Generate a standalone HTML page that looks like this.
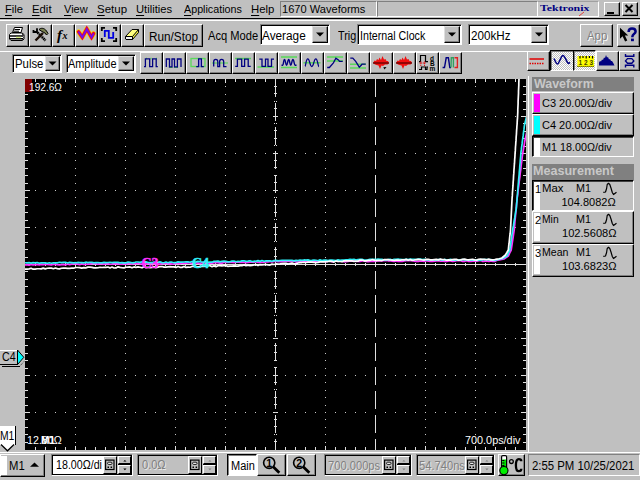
<!DOCTYPE html>
<html><head><meta charset="utf-8">
<style>
*{margin:0;padding:0;box-sizing:border-box}
html,body{width:640px;height:480px;overflow:hidden;background:#c0c0c0;font-family:"Liberation Sans",sans-serif;font-size:11px;color:#000;position:relative}
.a{position:absolute}
.t{position:absolute;white-space:nowrap;line-height:1}
</style></head><body>

<div class="t" id="t0" style="left:4.80px;top:4.00px;font-size:11px;;transform:scaleX(1.0153);transform-origin:0 0"><span style="text-decoration:underline;text-underline-offset:2px">F</span>ile</div>
<div class="t" id="t1" style="left:32.20px;top:4.00px;font-size:11px;;transform:scaleX(1.0300);transform-origin:0 0"><span style="text-decoration:underline;text-underline-offset:2px">E</span>dit</div>
<div class="t" id="t2" style="left:64.00px;top:4.00px;font-size:11px;"><span style="text-decoration:underline;text-underline-offset:2px">V</span>iew</div>
<div class="t" id="t3" style="left:96.60px;top:4.00px;font-size:11px;;transform:scaleX(1.0439);transform-origin:0 0"><span style="text-decoration:underline;text-underline-offset:2px">S</span>etup</div>
<div class="t" id="t4" style="left:136.40px;top:4.00px;font-size:11px;;transform:scaleX(1.0204);transform-origin:0 0"><span style="text-decoration:underline;text-underline-offset:2px">U</span>tilities</div>
<div class="t" id="t5" style="left:183.80px;top:4.00px;font-size:11px;;transform:scaleX(0.9758);transform-origin:0 0"><span style="text-decoration:underline;text-underline-offset:2px">A</span>pplications</div>
<div class="t" id="t6" style="left:251.40px;top:4.00px;font-size:11px;;transform:scaleX(1.0328);transform-origin:0 0"><span style="text-decoration:underline;text-underline-offset:2px">H</span>elp</div>
<div class="a" style="left:280px;top:1px;width:97px;height:16px;background:#c0c0c0;border-top:1px solid #808080;border-left:1px solid #808080;border-right:1px solid #fff;border-bottom:1px solid #fff;box-shadow:inset 1px 1px 0 #000;box-shadow:none"></div>
<div class="t" id="t7" style="left:281.90px;top:4.40px;font-size:11px;;transform:scaleX(1.0080);transform-origin:0 0">1670 Waveforms</div>
<div class="a" style="left:377px;top:1px;width:161px;height:16px;background:#c0c0c0;border-top:1px solid #808080;border-left:1px solid #808080;border-right:1px solid #fff;border-bottom:1px solid #fff;box-shadow:inset 1px 1px 0 #000;box-shadow:none"></div>
<div class="a" style="left:538px;top:1px;width:61px;height:16px;background:#c8c8c8;border-top:1px solid #a0a0a0;border-right:1px solid #fff;border-bottom:1px solid #fff"></div>
<div class="t" id="t8" style="left:540.00px;top:4.00px;font-size:9px;font-family:'Liberation Serif',serif;font-weight:bold;color:#000080;transform:scaleX(1.3153);transform-origin:0 0">Tektronix</div>
<svg class="a" style="left:578px;top:11px" width="8" height="6" viewBox="0 0 8 6"><path d="M1 5 L6 1" stroke="#e04040" stroke-width="1"/></svg>
<div class="a" style="left:604px;top:2px;width:16px;height:14px;background:#c0c0c0;border-top:1px solid #fff;border-left:1px solid #fff;border-right:1px solid #000;border-bottom:1px solid #000;box-shadow:inset -1px -1px 0 #808080;"></div>
<svg class="a" style="left:604px;top:2px" width="16" height="14" viewBox="0 0 16 14"><rect x="3" y="10" width="7" height="2" fill="#000"/></svg>
<div class="a" style="left:622px;top:2px;width:16px;height:14px;background:#c0c0c0;border-top:1px solid #fff;border-left:1px solid #fff;border-right:1px solid #000;border-bottom:1px solid #000;box-shadow:inset -1px -1px 0 #808080;"></div>
<svg class="a" style="left:622px;top:2px" width="16" height="14" viewBox="0 0 16 14"><path d="M3.5 3 L10.5 10 M10.5 3 L3.5 10" stroke="#000" stroke-width="2"/></svg>
<div class="a" style="left:0;top:18px;width:640px;height:1px;background:#000"></div>
<div class="a" style="left:0;top:20px;width:640px;height:1px;background:#fff"></div>
<div class="a" style="left:6px;top:24px;width:23px;height:23px;background:#c0c0c0;border-top:1px solid #fff;border-left:1px solid #fff;border-right:1px solid #000;border-bottom:1px solid #000;box-shadow:inset -1px -1px 0 #808080;"></div>
<svg class="a" style="left:6px;top:24px" width="23" height="23" viewBox="0 0 23 23"><path d="M8.5 3.5 H16.5 L15 8.5 H6.5 Z" fill="#fff" stroke="#000"/><path d="M8.5 5.5h5.5 M7.5 7.2h5.5" stroke="#000" stroke-width="1"/><path d="M5 9 H16 L18 10.5 V15 L16.5 16.5 H5 L3.5 15 V10.5 Z" fill="#fff" stroke="#000"/><path d="M4 12h13 M4 14.8h13" stroke="#000" stroke-width="1.5"/><rect x="10" y="12.8" width="5" height="1.3" fill="#d8f080"/><path d="M16 10h1v1h-1zM17 11h1v1h-1zM16 12h1v1h-1zM17 13h1v1h-1zM16 15h1v1h-1z" fill="#404040"/></svg>
<div class="a" style="left:29px;top:24px;width:23px;height:23px;background:#c0c0c0;border-top:1px solid #fff;border-left:1px solid #fff;border-right:1px solid #000;border-bottom:1px solid #000;box-shadow:inset -1px -1px 0 #808080;"></div>
<svg class="a" style="left:29px;top:24px" width="23" height="23" viewBox="0 0 23 23"><path d="M8.5 8.5 L16.5 16.5" stroke="#000" stroke-width="2.6" stroke-dasharray="1.5 0.6"/><path d="M14 9 L6.5 16.5" stroke="#1a0c04" stroke-width="2.4"/><path d="M4.5 6 V8 H8 V4.3" stroke="#000" stroke-width="1.8" fill="none"/><path d="M10 5.5 C12 3.5 15.5 4 17.5 7 L19 9.5 L17.5 11 L16 9 L13 7.5 Z" fill="#7a8050" stroke="#000" stroke-width="1"/></svg>
<div class="a" style="left:52px;top:24px;width:23px;height:23px;background:#c0c0c0;border-top:1px solid #fff;border-left:1px solid #fff;border-right:1px solid #000;border-bottom:1px solid #000;box-shadow:inset -1px -1px 0 #808080;"></div>
<svg class="a" style="left:52px;top:24px" width="23" height="23" viewBox="0 0 23 23"><text x="5" y="15.5" font-family="Liberation Serif" font-style="italic" font-weight="bold" font-size="15">f</text><text x="10.5" y="14.5" font-family="Liberation Serif" font-style="italic" font-weight="bold" font-size="10">x</text></svg>
<div class="a" style="left:75px;top:24px;width:23px;height:23px;background:#c0c0c0;border-top:1px solid #fff;border-left:1px solid #fff;border-right:1px solid #000;border-bottom:1px solid #000;box-shadow:inset -1px -1px 0 #808080;"></div>
<svg class="a" style="left:75px;top:24px" width="23" height="23" viewBox="0 0 23 23"><path d="M3.5 7.8 L7.3 13.3 L11.8 5 L16.5 13.3 L18.6 9.5" fill="none" stroke="#f8d000" stroke-width="4.8" stroke-linecap="round" stroke-linejoin="round"/><path d="M3.5 7.8 L7.3 13.3 L11.8 5 L16.5 13.3 L18.6 9.5" fill="none" stroke="#e80030" stroke-width="3.4" stroke-linecap="round"/><path d="M3.5 7.8 L7.3 13.3 L11.8 5 L16.5 13.3 L18.6 9.5" fill="none" stroke="#7010f0" stroke-width="1.7"/></svg>
<div class="a" style="left:98px;top:24px;width:23px;height:23px;background:#c0c0c0;border-top:1px solid #fff;border-left:1px solid #fff;border-right:1px solid #000;border-bottom:1px solid #000;box-shadow:inset -1px -1px 0 #808080;"></div>
<svg class="a" style="left:98px;top:24px" width="23" height="23" viewBox="0 0 23 23"><path d="M3.8 7 V3.8 H7 M15 3.8 H18.2 V7 M3.8 14 V17.2 H7 M15 17.2 H18.2 V14" stroke="#000" stroke-width="1.8" fill="none"/><path d="M6.8 13 V6.8 H10.8 V13.8 H15.2 V8" stroke="#0000e0" stroke-width="1.8" fill="none"/></svg>
<div class="a" style="left:121px;top:24px;width:23px;height:23px;background:#c0c0c0;border-top:1px solid #fff;border-left:1px solid #fff;border-right:1px solid #000;border-bottom:1px solid #000;box-shadow:inset -1px -1px 0 #808080;"></div>
<svg class="a" style="left:121px;top:24px" width="23" height="23" viewBox="0 0 23 23"><path d="M4.5 12.5 L11 5.5 H17.5 L11.5 12.5 Z" fill="#ffff80"/><path d="M11.5 12.5 L17.5 5.5 V8.5 L11.5 15.5 Z" fill="#f0f040"/><path d="M4.5 12.5 H11.5 V15.5 H5 L4.5 15 Z" fill="#f0f0f0"/><path d="M4.5 12.5 L11 5.5 H17.5 V8.5 L11.5 15.5 H5 L4.5 15 Z M4.5 12.5 H11.5 L17.5 5.5 M11.5 12.5 V15.5" stroke="#000" stroke-width="1" fill="none"/></svg>
<div class="a" style="left:144px;top:24px;width:59px;height:23px;background:#c0c0c0;border-top:1px solid #fff;border-left:1px solid #fff;border-right:1px solid #000;border-bottom:1px solid #000;box-shadow:inset -1px -1px 0 #808080;"></div>
<div class="t" id="t9" style="left:149.20px;top:30.56px;font-size:12px;;transform:scaleX(0.9807);transform-origin:0 0">Run/Stop</div>
<div class="t" id="t10" style="left:207.70px;top:30.00px;font-size:12px;;transform:scaleX(0.9280);transform-origin:0 0">Acq Mode</div>
<div class="a" style="left:260px;top:24px;width:70px;height:21px;background:#fff;border-top:1px solid #808080;border-left:1px solid #808080;border-right:1px solid #fff;border-bottom:1px solid #fff;box-shadow:inset 1px 1px 0 #000;"></div><div class="a" style="left:312px;top:26px;width:16px;height:17px;background:#c0c0c0;border-top:1px solid #fff;border-left:1px solid #fff;border-right:1px solid #000;border-bottom:1px solid #000;box-shadow:inset -1px -1px 0 #808080;border-top-color:#dfdfdf;border-left-color:#dfdfdf"></div><svg class="a" style="left:312px;top:26px" width="16" height="17" viewBox="0 0 16 17"><path d="M4.0 6.5 h8 l-4 4z" fill="#000"/></svg><div class="t" id="t11" style="left:262.00px;top:29.55px;font-size:12px;;transform:scaleX(0.9835);transform-origin:0 0">Average</div>
<div class="t" id="t12" style="left:337.70px;top:30.00px;font-size:12px;;transform:scaleX(0.9025);transform-origin:0 0">Trig</div>
<div class="a" style="left:357px;top:24px;width:105px;height:21px;background:#fff;border-top:1px solid #808080;border-left:1px solid #808080;border-right:1px solid #fff;border-bottom:1px solid #fff;box-shadow:inset 1px 1px 0 #000;"></div><div class="a" style="left:444px;top:26px;width:16px;height:17px;background:#c0c0c0;border-top:1px solid #fff;border-left:1px solid #fff;border-right:1px solid #000;border-bottom:1px solid #000;box-shadow:inset -1px -1px 0 #808080;border-top-color:#dfdfdf;border-left-color:#dfdfdf"></div><svg class="a" style="left:444px;top:26px" width="16" height="17" viewBox="0 0 16 17"><path d="M4.0 6.5 h8 l-4 4z" fill="#000"/></svg><div class="t" id="t13" style="left:360.40px;top:29.50px;font-size:12px;;transform:scaleX(0.8900);transform-origin:0 0">Internal Clock</div>
<div class="a" style="left:468px;top:24px;width:81px;height:21px;background:#fff;border-top:1px solid #808080;border-left:1px solid #808080;border-right:1px solid #fff;border-bottom:1px solid #fff;box-shadow:inset 1px 1px 0 #000;"></div><div class="a" style="left:531px;top:26px;width:16px;height:17px;background:#c0c0c0;border-top:1px solid #fff;border-left:1px solid #fff;border-right:1px solid #000;border-bottom:1px solid #000;box-shadow:inset -1px -1px 0 #808080;border-top-color:#dfdfdf;border-left-color:#dfdfdf"></div><svg class="a" style="left:531px;top:26px" width="16" height="17" viewBox="0 0 16 17"><path d="M4.0 6.5 h8 l-4 4z" fill="#000"/></svg><div class="t" id="t14" style="left:470.60px;top:30.00px;font-size:12px;;transform:scaleX(0.9696);transform-origin:0 0">200kHz</div>
<div class="a" style="left:580px;top:24px;width:33px;height:23px;background:#c0c0c0;border-top:1px solid #fff;border-left:1px solid #fff;border-right:1px solid #000;border-bottom:1px solid #000;box-shadow:inset -1px -1px 0 #808080;"></div>
<div class="t" id="t15" style="left:587.00px;top:30.00px;font-size:12px;color:#808080;text-shadow:1px 1px 0 #fff;transform:scaleX(0.9500);transform-origin:0 0">App</div>
<div class="a" style="left:617px;top:24px;width:23px;height:23px;background:#c0c0c0;border-top:1px solid #fff;border-left:1px solid #fff;border-right:1px solid #000;border-bottom:1px solid #000;box-shadow:inset -1px -1px 0 #808080;"></div>
<svg class="a" style="left:617px;top:24px" width="23" height="23" viewBox="0 0 23 23"><path d="M3 3.8 L3 14.8 L5.6 12.3 L8.1 17.6 L10.3 16.6 L7.9 11.6 L11.2 11.6 Z" fill="#000"/><path d="M11.6 8 C11.6 5.3 13 4.4 15 4.4 C17.2 4.4 18.6 5.6 18.6 7.4 C18.6 9.6 15.4 10.2 15.4 12.6 V13.2" stroke="#000080" stroke-width="2.5" fill="none"/><rect x="14" y="14.6" width="2.9" height="2.6" fill="#000080"/></svg>
<div class="a" style="left:0;top:51px;width:640px;height:1px;background:#fff"></div>
<div class="a" style="left:12px;top:54px;width:50px;height:19px;background:#fff;border-top:1px solid #808080;border-left:1px solid #808080;border-right:1px solid #fff;border-bottom:1px solid #fff;box-shadow:inset 1px 1px 0 #000;"></div><div class="a" style="left:45px;top:56px;width:15px;height:15px;background:#c0c0c0;border-top:1px solid #fff;border-left:1px solid #fff;border-right:1px solid #000;border-bottom:1px solid #000;box-shadow:inset -1px -1px 0 #808080;border-top-color:#dfdfdf;border-left-color:#dfdfdf"></div><svg class="a" style="left:45px;top:56px" width="15" height="15" viewBox="0 0 15 15"><path d="M3.5 5.5 h8 l-4 4z" fill="#000"/></svg><div class="t" id="t16" style="left:14.60px;top:58.00px;font-size:12px;;transform:scaleX(0.9477);transform-origin:0 0">Pulse</div>
<div class="a" style="left:66px;top:54px;width:70px;height:19px;background:#fff;border-top:1px solid #808080;border-left:1px solid #808080;border-right:1px solid #fff;border-bottom:1px solid #fff;box-shadow:inset 1px 1px 0 #000;"></div><div class="a" style="left:118px;top:56px;width:16px;height:15px;background:#c0c0c0;border-top:1px solid #fff;border-left:1px solid #fff;border-right:1px solid #000;border-bottom:1px solid #000;box-shadow:inset -1px -1px 0 #808080;border-top-color:#dfdfdf;border-left-color:#dfdfdf"></div><svg class="a" style="left:118px;top:56px" width="16" height="15" viewBox="0 0 16 15"><path d="M4.0 5.5 h8 l-4 4z" fill="#000"/></svg><div class="t" id="t17" style="left:68.40px;top:58.00px;font-size:12px;;transform:scaleX(0.9080);transform-origin:0 0">Amplitude</div>
<div class="a" style="left:140px;top:52px;width:23px;height:22px;background:#c0c0c0;border-top:1px solid #fff;border-left:1px solid #fff;border-right:1px solid #000;border-bottom:1px solid #000;box-shadow:inset -1px -1px 0 #808080;"></div>
<svg class="a" style="left:140px;top:52px" width="23" height="22" viewBox="0 0 23 22"><path d="M6 6.5h1M10.5 6.5h1M16 6.5h1" stroke="#40e040" stroke-width="1.5"/><path d="M4 14.6 H5.4 V6.8 H9.7 V14.6 H12.6 V6.8 H16.2 V14.6 H17.8" stroke="#000080" stroke-width="1.3" fill="none"/></svg>
<div class="a" style="left:163px;top:52px;width:23px;height:22px;background:#c0c0c0;border-top:1px solid #fff;border-left:1px solid #fff;border-right:1px solid #000;border-bottom:1px solid #000;box-shadow:inset -1px -1px 0 #808080;"></div>
<svg class="a" style="left:163px;top:52px" width="23" height="22" viewBox="0 0 23 22"><path d="M3.3 15 V7 H6.5 V15 H9 V7 H11.5 V15 H14.4 V7 H18 V15" stroke="#000080" stroke-width="1.3" fill="none"/><path d="M6.5 15.5 H9 M11.5 15.5 H14.4" stroke="#208040" stroke-width="0.8"/></svg>
<div class="a" style="left:186px;top:52px;width:23px;height:22px;background:#c0c0c0;border-top:1px solid #fff;border-left:1px solid #fff;border-right:1px solid #000;border-bottom:1px solid #000;box-shadow:inset -1px -1px 0 #808080;"></div>
<svg class="a" style="left:186px;top:52px" width="23" height="22" viewBox="0 0 23 22"><rect x="5" y="6.5" width="14" height="8" fill="none" stroke="#40e040" stroke-width="1.3" opacity="0.8"/><rect x="12.6" y="6.8" width="2.8" height="7.8" fill="#b0a0f0"/><path d="M10.2 14.6 H12.6 V6.8 H15.4 V14.6 H17.8" stroke="#000080" stroke-width="1.3" fill="none"/></svg>
<div class="a" style="left:209px;top:52px;width:23px;height:22px;background:#c0c0c0;border-top:1px solid #fff;border-left:1px solid #fff;border-right:1px solid #000;border-bottom:1px solid #000;box-shadow:inset -1px -1px 0 #808080;"></div>
<svg class="a" style="left:209px;top:52px" width="23" height="22" viewBox="0 0 23 22"><path d="M3 11 H19" stroke="#40e040" stroke-width="1.3" opacity="0.7"/><path d="M4.7 14.6 V9.8 C4.7 6.6 8.8 6.6 8.8 9.8 V14.6 H10.6 V9.8 C10.6 6.6 14.7 6.6 14.7 9.8 V14.6 H17.5" stroke="#000080" stroke-width="1.3" fill="none"/></svg>
<div class="a" style="left:232px;top:52px;width:23px;height:22px;background:#c0c0c0;border-top:1px solid #fff;border-left:1px solid #fff;border-right:1px solid #000;border-bottom:1px solid #000;box-shadow:inset -1px -1px 0 #808080;"></div>
<svg class="a" style="left:232px;top:52px" width="23" height="22" viewBox="0 0 23 22"><path d="M3 6.5 H19" stroke="#40e040" stroke-width="1.5" opacity="0.8"/><path d="M3.2 14.4 H5.4 V7.2 H9.7 V14.4 H12.6 V7.2 H16.2 V14.4 H18.7" stroke="#000080" stroke-width="1.3" fill="none"/></svg>
<div class="a" style="left:255px;top:52px;width:23px;height:22px;background:#c0c0c0;border-top:1px solid #fff;border-left:1px solid #fff;border-right:1px solid #000;border-bottom:1px solid #000;box-shadow:inset -1px -1px 0 #808080;"></div>
<svg class="a" style="left:255px;top:52px" width="23" height="22" viewBox="0 0 23 22"><path d="M2.5 15 H19" stroke="#40e040" stroke-width="1.5" opacity="0.8"/><path d="M4.3 7.2 H7 V14.4 H10.5 V7.2 H13 V14.4 H16.5 V7.2 H19" stroke="#000080" stroke-width="1.3" fill="none"/></svg>
<div class="a" style="left:278px;top:52px;width:23px;height:22px;background:#c0c0c0;border-top:1px solid #fff;border-left:1px solid #fff;border-right:1px solid #000;border-bottom:1px solid #000;box-shadow:inset -1px -1px 0 #808080;"></div>
<svg class="a" style="left:278px;top:52px" width="23" height="22" viewBox="0 0 23 22"><path d="M3 5 H19 M3 15.5 H19" stroke="#40e040" stroke-width="1.5" opacity="0.8"/><path d="M3.5 13.2 H4.8 C5.6 13.2 5.4 7.5 6.5 7.5 C7.6 7.5 7.5 13.2 8.6 13.2 C9.6 13.2 9.6 7.5 10.7 7.5 C11.8 7.5 11.7 13.2 12.8 13.2 C13.8 13.2 13.8 7.5 14.9 7.5 C16 7.5 16.2 13.2 17 13.2 H18.5" stroke="#000080" stroke-width="1.4" fill="none"/></svg>
<div class="a" style="left:301px;top:52px;width:23px;height:22px;background:#c0c0c0;border-top:1px solid #fff;border-left:1px solid #fff;border-right:1px solid #000;border-bottom:1px solid #000;box-shadow:inset -1px -1px 0 #808080;"></div>
<svg class="a" style="left:301px;top:52px" width="23" height="22" viewBox="0 0 23 22"><path d="M2.5 10.8 H19.5" stroke="#40e040" stroke-width="1.5" opacity="0.8"/><path d="M4 14.6 C4.8 14.6 4.8 6.8 6.8 6.8 C8.8 6.8 8.8 14.6 10.8 14.6 C12.8 14.6 12.8 6.8 14.8 6.8 C16.8 6.8 16.8 14.6 18 14.6" stroke="#000080" stroke-width="1.3" fill="none"/></svg>
<div class="a" style="left:324px;top:52px;width:23px;height:22px;background:#c0c0c0;border-top:1px solid #fff;border-left:1px solid #fff;border-right:1px solid #000;border-bottom:1px solid #000;box-shadow:inset -1px -1px 0 #808080;"></div>
<svg class="a" style="left:324px;top:52px" width="23" height="22" viewBox="0 0 23 22"><path d="M3 5 H19 M3 9 H19" stroke="#40e040" stroke-width="1.5" opacity="0.8"/><path d="M3.2 15.5 H5.4 L9.4 10.8 L11.9 6.1 L14.4 7.9 L15.5 9.4 H18.7" stroke="#000080" stroke-width="1.3" fill="none"/></svg>
<div class="a" style="left:347px;top:52px;width:23px;height:22px;background:#c0c0c0;border-top:1px solid #fff;border-left:1px solid #fff;border-right:1px solid #000;border-bottom:1px solid #000;box-shadow:inset -1px -1px 0 #808080;"></div>
<svg class="a" style="left:347px;top:52px" width="23" height="22" viewBox="0 0 23 22"><path d="M3 12.2 H19 M3 16 H19" stroke="#40e040" stroke-width="1.5" opacity="0.8"/><path d="M3.3 6.1 H5.8 L8.7 9.4 L12.3 15.1 L14.4 13 L15 12.2 H18.7" stroke="#000080" stroke-width="1.3" fill="none"/></svg>
<div class="a" style="left:370px;top:52px;width:23px;height:22px;background:#c0c0c0;border-top:1px solid #fff;border-left:1px solid #fff;border-right:1px solid #000;border-bottom:1px solid #000;box-shadow:inset -1px -1px 0 #808080;"></div>
<svg class="a" style="left:370px;top:52px" width="23" height="22" viewBox="0 0 23 22"><path d="M3 11 L4.5 8.5 L6 9 L7 7 L8.5 8 L9.5 5.5 L11 8 L12.5 4 L14 7.5 L15.5 7 L16.5 9 L18 9 L19 11 L17.5 12.5 L15 12.5 L13 14 L11.5 13.5 L10 17 L8.5 13.5 L6.5 13 L5 12.5 Z" fill="#f01010"/><path d="M3 11 H19" stroke="#600000" stroke-width="1.3"/><path d="M13.3 15.3 L16.5 15 L14.5 17.5 Z" fill="#000"/></svg>
<div class="a" style="left:393px;top:52px;width:23px;height:22px;background:#c0c0c0;border-top:1px solid #fff;border-left:1px solid #fff;border-right:1px solid #000;border-bottom:1px solid #000;box-shadow:inset -1px -1px 0 #808080;"></div>
<svg class="a" style="left:393px;top:52px" width="23" height="22" viewBox="0 0 23 22"><path d="M3 11 L4.5 8.5 L6 9 L7 7 L8.5 8 L9.5 5.5 L11 8 L12.5 4 L14 7.5 L15.5 7 L16.5 9 L18 9 L19 11 L17.5 12.5 L15 12.5 L13 14 L11.5 13.5 L10 17 L8.5 13.5 L6.5 13 L5 12.5 Z" fill="#f01010"/><path d="M3 11 H19" stroke="#600000" stroke-width="1.3"/></svg>
<div class="a" style="left:416px;top:52px;width:23px;height:22px;background:#c0c0c0;border-top:1px solid #fff;border-left:1px solid #fff;border-right:1px solid #000;border-bottom:1px solid #000;box-shadow:inset -1px -1px 0 #808080;"></div>
<svg class="a" style="left:416px;top:52px" width="23" height="22" viewBox="0 0 23 22"><path d="M3 9.7 H4.5 V3.5 H9.5 V9.7 H12" stroke="#000" stroke-width="1.2" fill="none"/><path d="M3 17.5 H5.5 V15 H9.5 V17.5 H11 V15 H12" stroke="#000" stroke-width="1.2" fill="none"/><path d="M4.8 9.5 V14 M8.5 9.5 V14 M3.5 11 H10" stroke="#e00000" stroke-width="1" stroke-dasharray="1 0.7"/><text x="14" y="8.5" font-size="6.5" font-weight="bold" font-family="Liberation Sans">d</text><text x="14" y="13.5" font-size="6.5" font-weight="bold" font-family="Liberation Sans">B</text><text x="13.5" y="18.5" font-size="6.5" font-weight="bold" font-family="Liberation Sans">m</text></svg>
<div class="a" style="left:439px;top:52px;width:23px;height:22px;background:#c0c0c0;border-top:1px solid #fff;border-left:1px solid #fff;border-right:1px solid #000;border-bottom:1px solid #000;box-shadow:inset -1px -1px 0 #808080;"></div>
<svg class="a" style="left:439px;top:52px" width="23" height="22" viewBox="0 0 23 22"><path d="M3.6 15.5 H5.5 L7.2 5.8 H9.4 L10.8 15.5 H12" stroke="#000080" stroke-width="1.4" fill="none"/><path d="M12 15.5 L12.3 5.8 H14.4 V15.5" stroke="#30a060" stroke-width="1.4" fill="none"/><path d="M15.5 5.8 H18.4 V15.5 H15.5" stroke="#e02020" stroke-width="1.4" fill="none"/></svg>
<div class="a" style="left:527px;top:51px;width:23px;height:20px;background:#c0c0c0;border-top:1px solid #fff;border-left:1px solid #fff;border-right:1px solid #000;border-bottom:1px solid #000;box-shadow:inset -1px -1px 0 #808080;"></div>
<svg class="a" style="left:527px;top:51px" width="23" height="20" viewBox="0 0 23 20"><path d="M2.5 8 H17" stroke="#e00000" stroke-width="1.5"/><path d="M2.5 12.5 H17" stroke="#e00000" stroke-width="1.5" stroke-dasharray="1.5 1"/></svg>
<div class="a" style="left:550px;top:50px;width:24px;height:21px;background-color:#e0e0e0;background-image:repeating-conic-gradient(#fff 0 25%,#c0c0c0 0 50%);background-size:2px 2px;border-top:1px solid #000;border-left:1px solid #000;border-right:1px solid #fff;border-bottom:1px solid #fff;box-shadow:inset 1px 1px 0 #808080"></div>
<svg class="a" style="left:550px;top:50px" width="24" height="21" viewBox="0 0 24 21"><path d="M4 8.5 C5.5 12 6.5 14 7.5 14 C9 14 11 5.5 13 5.5 C15 5.5 17 13.5 18.5 13.5 L20 12.5" stroke="#000080" stroke-width="1.6" fill="none"/></svg>
<div class="a" style="left:573px;top:50px;width:23px;height:21px;background-color:#e0e0e0;background-image:repeating-conic-gradient(#fff 0 25%,#c0c0c0 0 50%);background-size:2px 2px;border-top:1px solid #000;border-left:1px solid #000;border-right:1px solid #fff;border-bottom:1px solid #fff;box-shadow:inset 1px 1px 0 #808080"></div>
<svg class="a" style="left:573px;top:50px" width="23" height="21" viewBox="0 0 23 21"><rect x="4.4" y="6" width="16.7" height="11" fill="#ffff00"/><path d="M7 6V8.5M10 6V8M13.2 6V8.5M16.4 6V8M19.5 6V8.5" stroke="#000" stroke-width="1.2"/><path d="M4.4 16.4H21" stroke="#000" stroke-width="1" stroke-dasharray="1 1"/><text x="5.6" y="14.6" font-size="6.5" font-weight="bold" font-family="Liberation Sans" fill="#404000">1</text><text x="11" y="14.6" font-size="6.5" font-weight="bold" font-family="Liberation Sans" fill="#404000">2</text><text x="16.6" y="14.6" font-size="6.5" font-weight="bold" font-family="Liberation Sans" fill="#404000">3</text></svg>
<div class="a" style="left:596px;top:51px;width:23px;height:20px;background:#c0c0c0;border-top:1px solid #fff;border-left:1px solid #fff;border-right:1px solid #000;border-bottom:1px solid #000;box-shadow:inset -1px -1px 0 #808080;"></div>
<svg class="a" style="left:596px;top:51px" width="23" height="20" viewBox="0 0 23 20"><path d="M3 11.5 L4 10 L5 10.5 L6 8.5 L7 9 L8 6.5 L9 7 L10 4 L11 6.5 L12 6 L13 8.5 L14 8 L15 10 L16 10 L17 11.5 L18.5 14.5 H3 Z" fill="#000080"/></svg>
<div class="a" style="left:619px;top:51px;width:21px;height:20px;background:#c0c0c0;border-top:1px solid #fff;border-left:1px solid #fff;border-right:1px solid #000;border-bottom:1px solid #000;box-shadow:inset -1px -1px 0 #808080;"></div>
<svg class="a" style="left:619px;top:51px" width="21" height="20" viewBox="0 0 21 20"><path d="M6.5 3 V5.2 H14.8 V3 M6.5 16.5 V14.2 H14.8 V16.5" stroke="#000080" stroke-width="1.4" fill="none"/><path d="M6.5 9.9 L8.5 7.6 H12.8 L14.8 9.9 L12.8 12.3 H8.5 Z" fill="none" stroke="#000080" stroke-width="1.4"/></svg>
<svg class="a" style="left:0px;top:0px" width="640" height="480" viewBox="0 0 640 480"><rect x="25" y="79" width="501" height="371" fill="#000"/><path d="M75 86h1v1h-1zM75 94h1v1h-1zM75 101h1v1h-1zM75 109h1v1h-1zM75 116h1v1h-1zM75 123h1v1h-1zM75 131h1v1h-1zM75 138h1v1h-1zM75 146h1v1h-1zM75 153h1v1h-1zM75 160h1v1h-1zM75 168h1v1h-1zM75 175h1v1h-1zM75 183h1v1h-1zM75 190h1v1h-1zM75 197h1v1h-1zM75 205h1v1h-1zM75 212h1v1h-1zM75 220h1v1h-1zM75 227h1v1h-1zM75 234h1v1h-1zM75 242h1v1h-1zM75 249h1v1h-1zM75 257h1v1h-1zM75 264h1v1h-1zM75 271h1v1h-1zM75 279h1v1h-1zM75 286h1v1h-1zM75 294h1v1h-1zM75 301h1v1h-1zM75 308h1v1h-1zM75 316h1v1h-1zM75 323h1v1h-1zM75 331h1v1h-1zM75 338h1v1h-1zM75 345h1v1h-1zM75 353h1v1h-1zM75 360h1v1h-1zM75 368h1v1h-1zM75 375h1v1h-1zM75 382h1v1h-1zM75 390h1v1h-1zM75 397h1v1h-1zM75 405h1v1h-1zM75 412h1v1h-1zM75 419h1v1h-1zM75 427h1v1h-1zM75 434h1v1h-1zM75 442h1v1h-1zM125 86h1v1h-1zM125 94h1v1h-1zM125 101h1v1h-1zM125 109h1v1h-1zM125 116h1v1h-1zM125 123h1v1h-1zM125 131h1v1h-1zM125 138h1v1h-1zM125 146h1v1h-1zM125 153h1v1h-1zM125 160h1v1h-1zM125 168h1v1h-1zM125 175h1v1h-1zM125 183h1v1h-1zM125 190h1v1h-1zM125 197h1v1h-1zM125 205h1v1h-1zM125 212h1v1h-1zM125 220h1v1h-1zM125 227h1v1h-1zM125 234h1v1h-1zM125 242h1v1h-1zM125 249h1v1h-1zM125 257h1v1h-1zM125 264h1v1h-1zM125 271h1v1h-1zM125 279h1v1h-1zM125 286h1v1h-1zM125 294h1v1h-1zM125 301h1v1h-1zM125 308h1v1h-1zM125 316h1v1h-1zM125 323h1v1h-1zM125 331h1v1h-1zM125 338h1v1h-1zM125 345h1v1h-1zM125 353h1v1h-1zM125 360h1v1h-1zM125 368h1v1h-1zM125 375h1v1h-1zM125 382h1v1h-1zM125 390h1v1h-1zM125 397h1v1h-1zM125 405h1v1h-1zM125 412h1v1h-1zM125 419h1v1h-1zM125 427h1v1h-1zM125 434h1v1h-1zM125 442h1v1h-1zM175 86h1v1h-1zM175 94h1v1h-1zM175 101h1v1h-1zM175 109h1v1h-1zM175 116h1v1h-1zM175 123h1v1h-1zM175 131h1v1h-1zM175 138h1v1h-1zM175 146h1v1h-1zM175 153h1v1h-1zM175 160h1v1h-1zM175 168h1v1h-1zM175 175h1v1h-1zM175 183h1v1h-1zM175 190h1v1h-1zM175 197h1v1h-1zM175 205h1v1h-1zM175 212h1v1h-1zM175 220h1v1h-1zM175 227h1v1h-1zM175 234h1v1h-1zM175 242h1v1h-1zM175 249h1v1h-1zM175 257h1v1h-1zM175 264h1v1h-1zM175 271h1v1h-1zM175 279h1v1h-1zM175 286h1v1h-1zM175 294h1v1h-1zM175 301h1v1h-1zM175 308h1v1h-1zM175 316h1v1h-1zM175 323h1v1h-1zM175 331h1v1h-1zM175 338h1v1h-1zM175 345h1v1h-1zM175 353h1v1h-1zM175 360h1v1h-1zM175 368h1v1h-1zM175 375h1v1h-1zM175 382h1v1h-1zM175 390h1v1h-1zM175 397h1v1h-1zM175 405h1v1h-1zM175 412h1v1h-1zM175 419h1v1h-1zM175 427h1v1h-1zM175 434h1v1h-1zM175 442h1v1h-1zM225 86h1v1h-1zM225 94h1v1h-1zM225 101h1v1h-1zM225 109h1v1h-1zM225 116h1v1h-1zM225 123h1v1h-1zM225 131h1v1h-1zM225 138h1v1h-1zM225 146h1v1h-1zM225 153h1v1h-1zM225 160h1v1h-1zM225 168h1v1h-1zM225 175h1v1h-1zM225 183h1v1h-1zM225 190h1v1h-1zM225 197h1v1h-1zM225 205h1v1h-1zM225 212h1v1h-1zM225 220h1v1h-1zM225 227h1v1h-1zM225 234h1v1h-1zM225 242h1v1h-1zM225 249h1v1h-1zM225 257h1v1h-1zM225 264h1v1h-1zM225 271h1v1h-1zM225 279h1v1h-1zM225 286h1v1h-1zM225 294h1v1h-1zM225 301h1v1h-1zM225 308h1v1h-1zM225 316h1v1h-1zM225 323h1v1h-1zM225 331h1v1h-1zM225 338h1v1h-1zM225 345h1v1h-1zM225 353h1v1h-1zM225 360h1v1h-1zM225 368h1v1h-1zM225 375h1v1h-1zM225 382h1v1h-1zM225 390h1v1h-1zM225 397h1v1h-1zM225 405h1v1h-1zM225 412h1v1h-1zM225 419h1v1h-1zM225 427h1v1h-1zM225 434h1v1h-1zM225 442h1v1h-1zM325 86h1v1h-1zM325 94h1v1h-1zM325 101h1v1h-1zM325 109h1v1h-1zM325 116h1v1h-1zM325 123h1v1h-1zM325 131h1v1h-1zM325 138h1v1h-1zM325 146h1v1h-1zM325 153h1v1h-1zM325 160h1v1h-1zM325 168h1v1h-1zM325 175h1v1h-1zM325 183h1v1h-1zM325 190h1v1h-1zM325 197h1v1h-1zM325 205h1v1h-1zM325 212h1v1h-1zM325 220h1v1h-1zM325 227h1v1h-1zM325 234h1v1h-1zM325 242h1v1h-1zM325 249h1v1h-1zM325 257h1v1h-1zM325 264h1v1h-1zM325 271h1v1h-1zM325 279h1v1h-1zM325 286h1v1h-1zM325 294h1v1h-1zM325 301h1v1h-1zM325 308h1v1h-1zM325 316h1v1h-1zM325 323h1v1h-1zM325 331h1v1h-1zM325 338h1v1h-1zM325 345h1v1h-1zM325 353h1v1h-1zM325 360h1v1h-1zM325 368h1v1h-1zM325 375h1v1h-1zM325 382h1v1h-1zM325 390h1v1h-1zM325 397h1v1h-1zM325 405h1v1h-1zM325 412h1v1h-1zM325 419h1v1h-1zM325 427h1v1h-1zM325 434h1v1h-1zM325 442h1v1h-1zM425 86h1v1h-1zM425 94h1v1h-1zM425 101h1v1h-1zM425 109h1v1h-1zM425 116h1v1h-1zM425 123h1v1h-1zM425 131h1v1h-1zM425 138h1v1h-1zM425 146h1v1h-1zM425 153h1v1h-1zM425 160h1v1h-1zM425 168h1v1h-1zM425 175h1v1h-1zM425 183h1v1h-1zM425 190h1v1h-1zM425 197h1v1h-1zM425 205h1v1h-1zM425 212h1v1h-1zM425 220h1v1h-1zM425 227h1v1h-1zM425 234h1v1h-1zM425 242h1v1h-1zM425 249h1v1h-1zM425 257h1v1h-1zM425 264h1v1h-1zM425 271h1v1h-1zM425 279h1v1h-1zM425 286h1v1h-1zM425 294h1v1h-1zM425 301h1v1h-1zM425 308h1v1h-1zM425 316h1v1h-1zM425 323h1v1h-1zM425 331h1v1h-1zM425 338h1v1h-1zM425 345h1v1h-1zM425 353h1v1h-1zM425 360h1v1h-1zM425 368h1v1h-1zM425 375h1v1h-1zM425 382h1v1h-1zM425 390h1v1h-1zM425 397h1v1h-1zM425 405h1v1h-1zM425 412h1v1h-1zM425 419h1v1h-1zM425 427h1v1h-1zM425 434h1v1h-1zM425 442h1v1h-1zM475 86h1v1h-1zM475 94h1v1h-1zM475 101h1v1h-1zM475 109h1v1h-1zM475 116h1v1h-1zM475 123h1v1h-1zM475 131h1v1h-1zM475 138h1v1h-1zM475 146h1v1h-1zM475 153h1v1h-1zM475 160h1v1h-1zM475 168h1v1h-1zM475 175h1v1h-1zM475 183h1v1h-1zM475 190h1v1h-1zM475 197h1v1h-1zM475 205h1v1h-1zM475 212h1v1h-1zM475 220h1v1h-1zM475 227h1v1h-1zM475 234h1v1h-1zM475 242h1v1h-1zM475 249h1v1h-1zM475 257h1v1h-1zM475 264h1v1h-1zM475 271h1v1h-1zM475 279h1v1h-1zM475 286h1v1h-1zM475 294h1v1h-1zM475 301h1v1h-1zM475 308h1v1h-1zM475 316h1v1h-1zM475 323h1v1h-1zM475 331h1v1h-1zM475 338h1v1h-1zM475 345h1v1h-1zM475 353h1v1h-1zM475 360h1v1h-1zM475 368h1v1h-1zM475 375h1v1h-1zM475 382h1v1h-1zM475 390h1v1h-1zM475 397h1v1h-1zM475 405h1v1h-1zM475 412h1v1h-1zM475 419h1v1h-1zM475 427h1v1h-1zM475 434h1v1h-1zM475 442h1v1h-1zM35 116h1v1h-1zM45 116h1v1h-1zM55 116h1v1h-1zM65 116h1v1h-1zM75 116h1v1h-1zM85 116h1v1h-1zM95 116h1v1h-1zM105 116h1v1h-1zM115 116h1v1h-1zM125 116h1v1h-1zM135 116h1v1h-1zM145 116h1v1h-1zM155 116h1v1h-1zM165 116h1v1h-1zM175 116h1v1h-1zM185 116h1v1h-1zM195 116h1v1h-1zM205 116h1v1h-1zM215 116h1v1h-1zM225 116h1v1h-1zM235 116h1v1h-1zM245 116h1v1h-1zM255 116h1v1h-1zM265 116h1v1h-1zM275 116h1v1h-1zM285 116h1v1h-1zM295 116h1v1h-1zM305 116h1v1h-1zM315 116h1v1h-1zM325 116h1v1h-1zM335 116h1v1h-1zM345 116h1v1h-1zM355 116h1v1h-1zM365 116h1v1h-1zM385 116h1v1h-1zM395 116h1v1h-1zM405 116h1v1h-1zM415 116h1v1h-1zM425 116h1v1h-1zM435 116h1v1h-1zM445 116h1v1h-1zM455 116h1v1h-1zM465 116h1v1h-1zM475 116h1v1h-1zM485 116h1v1h-1zM495 116h1v1h-1zM505 116h1v1h-1zM515 116h1v1h-1zM35 153h1v1h-1zM45 153h1v1h-1zM55 153h1v1h-1zM65 153h1v1h-1zM75 153h1v1h-1zM85 153h1v1h-1zM95 153h1v1h-1zM105 153h1v1h-1zM115 153h1v1h-1zM125 153h1v1h-1zM135 153h1v1h-1zM145 153h1v1h-1zM155 153h1v1h-1zM165 153h1v1h-1zM175 153h1v1h-1zM185 153h1v1h-1zM195 153h1v1h-1zM205 153h1v1h-1zM215 153h1v1h-1zM225 153h1v1h-1zM235 153h1v1h-1zM245 153h1v1h-1zM255 153h1v1h-1zM265 153h1v1h-1zM275 153h1v1h-1zM285 153h1v1h-1zM295 153h1v1h-1zM305 153h1v1h-1zM315 153h1v1h-1zM325 153h1v1h-1zM335 153h1v1h-1zM345 153h1v1h-1zM355 153h1v1h-1zM365 153h1v1h-1zM385 153h1v1h-1zM395 153h1v1h-1zM405 153h1v1h-1zM415 153h1v1h-1zM425 153h1v1h-1zM435 153h1v1h-1zM445 153h1v1h-1zM455 153h1v1h-1zM465 153h1v1h-1zM475 153h1v1h-1zM485 153h1v1h-1zM495 153h1v1h-1zM505 153h1v1h-1zM515 153h1v1h-1zM35 190h1v1h-1zM45 190h1v1h-1zM55 190h1v1h-1zM65 190h1v1h-1zM75 190h1v1h-1zM85 190h1v1h-1zM95 190h1v1h-1zM105 190h1v1h-1zM115 190h1v1h-1zM125 190h1v1h-1zM135 190h1v1h-1zM145 190h1v1h-1zM155 190h1v1h-1zM165 190h1v1h-1zM175 190h1v1h-1zM185 190h1v1h-1zM195 190h1v1h-1zM205 190h1v1h-1zM215 190h1v1h-1zM225 190h1v1h-1zM235 190h1v1h-1zM245 190h1v1h-1zM255 190h1v1h-1zM265 190h1v1h-1zM275 190h1v1h-1zM285 190h1v1h-1zM295 190h1v1h-1zM305 190h1v1h-1zM315 190h1v1h-1zM325 190h1v1h-1zM335 190h1v1h-1zM345 190h1v1h-1zM355 190h1v1h-1zM365 190h1v1h-1zM385 190h1v1h-1zM395 190h1v1h-1zM405 190h1v1h-1zM415 190h1v1h-1zM425 190h1v1h-1zM435 190h1v1h-1zM445 190h1v1h-1zM455 190h1v1h-1zM465 190h1v1h-1zM475 190h1v1h-1zM485 190h1v1h-1zM495 190h1v1h-1zM505 190h1v1h-1zM515 190h1v1h-1zM35 227h1v1h-1zM45 227h1v1h-1zM55 227h1v1h-1zM65 227h1v1h-1zM75 227h1v1h-1zM85 227h1v1h-1zM95 227h1v1h-1zM105 227h1v1h-1zM115 227h1v1h-1zM125 227h1v1h-1zM135 227h1v1h-1zM145 227h1v1h-1zM155 227h1v1h-1zM165 227h1v1h-1zM175 227h1v1h-1zM185 227h1v1h-1zM195 227h1v1h-1zM205 227h1v1h-1zM215 227h1v1h-1zM225 227h1v1h-1zM235 227h1v1h-1zM245 227h1v1h-1zM255 227h1v1h-1zM265 227h1v1h-1zM275 227h1v1h-1zM285 227h1v1h-1zM295 227h1v1h-1zM305 227h1v1h-1zM315 227h1v1h-1zM325 227h1v1h-1zM335 227h1v1h-1zM345 227h1v1h-1zM355 227h1v1h-1zM365 227h1v1h-1zM385 227h1v1h-1zM395 227h1v1h-1zM405 227h1v1h-1zM415 227h1v1h-1zM425 227h1v1h-1zM435 227h1v1h-1zM445 227h1v1h-1zM455 227h1v1h-1zM465 227h1v1h-1zM475 227h1v1h-1zM485 227h1v1h-1zM495 227h1v1h-1zM505 227h1v1h-1zM515 227h1v1h-1zM35 301h1v1h-1zM45 301h1v1h-1zM55 301h1v1h-1zM65 301h1v1h-1zM75 301h1v1h-1zM85 301h1v1h-1zM95 301h1v1h-1zM105 301h1v1h-1zM115 301h1v1h-1zM125 301h1v1h-1zM135 301h1v1h-1zM145 301h1v1h-1zM155 301h1v1h-1zM165 301h1v1h-1zM175 301h1v1h-1zM185 301h1v1h-1zM195 301h1v1h-1zM205 301h1v1h-1zM215 301h1v1h-1zM225 301h1v1h-1zM235 301h1v1h-1zM245 301h1v1h-1zM255 301h1v1h-1zM265 301h1v1h-1zM275 301h1v1h-1zM285 301h1v1h-1zM295 301h1v1h-1zM305 301h1v1h-1zM315 301h1v1h-1zM325 301h1v1h-1zM335 301h1v1h-1zM345 301h1v1h-1zM355 301h1v1h-1zM365 301h1v1h-1zM385 301h1v1h-1zM395 301h1v1h-1zM405 301h1v1h-1zM415 301h1v1h-1zM425 301h1v1h-1zM435 301h1v1h-1zM445 301h1v1h-1zM455 301h1v1h-1zM465 301h1v1h-1zM475 301h1v1h-1zM485 301h1v1h-1zM495 301h1v1h-1zM505 301h1v1h-1zM515 301h1v1h-1zM35 338h1v1h-1zM45 338h1v1h-1zM55 338h1v1h-1zM65 338h1v1h-1zM75 338h1v1h-1zM85 338h1v1h-1zM95 338h1v1h-1zM105 338h1v1h-1zM115 338h1v1h-1zM125 338h1v1h-1zM135 338h1v1h-1zM145 338h1v1h-1zM155 338h1v1h-1zM165 338h1v1h-1zM175 338h1v1h-1zM185 338h1v1h-1zM195 338h1v1h-1zM205 338h1v1h-1zM215 338h1v1h-1zM225 338h1v1h-1zM235 338h1v1h-1zM245 338h1v1h-1zM255 338h1v1h-1zM265 338h1v1h-1zM275 338h1v1h-1zM285 338h1v1h-1zM295 338h1v1h-1zM305 338h1v1h-1zM315 338h1v1h-1zM325 338h1v1h-1zM335 338h1v1h-1zM345 338h1v1h-1zM355 338h1v1h-1zM365 338h1v1h-1zM385 338h1v1h-1zM395 338h1v1h-1zM405 338h1v1h-1zM415 338h1v1h-1zM425 338h1v1h-1zM435 338h1v1h-1zM445 338h1v1h-1zM455 338h1v1h-1zM465 338h1v1h-1zM475 338h1v1h-1zM485 338h1v1h-1zM495 338h1v1h-1zM505 338h1v1h-1zM515 338h1v1h-1zM35 375h1v1h-1zM45 375h1v1h-1zM55 375h1v1h-1zM65 375h1v1h-1zM75 375h1v1h-1zM85 375h1v1h-1zM95 375h1v1h-1zM105 375h1v1h-1zM115 375h1v1h-1zM125 375h1v1h-1zM135 375h1v1h-1zM145 375h1v1h-1zM155 375h1v1h-1zM165 375h1v1h-1zM175 375h1v1h-1zM185 375h1v1h-1zM195 375h1v1h-1zM205 375h1v1h-1zM215 375h1v1h-1zM225 375h1v1h-1zM235 375h1v1h-1zM245 375h1v1h-1zM255 375h1v1h-1zM265 375h1v1h-1zM275 375h1v1h-1zM285 375h1v1h-1zM295 375h1v1h-1zM305 375h1v1h-1zM315 375h1v1h-1zM325 375h1v1h-1zM335 375h1v1h-1zM345 375h1v1h-1zM355 375h1v1h-1zM365 375h1v1h-1zM385 375h1v1h-1zM395 375h1v1h-1zM405 375h1v1h-1zM415 375h1v1h-1zM425 375h1v1h-1zM435 375h1v1h-1zM445 375h1v1h-1zM455 375h1v1h-1zM465 375h1v1h-1zM475 375h1v1h-1zM485 375h1v1h-1zM495 375h1v1h-1zM505 375h1v1h-1zM515 375h1v1h-1zM35 412h1v1h-1zM45 412h1v1h-1zM55 412h1v1h-1zM65 412h1v1h-1zM75 412h1v1h-1zM85 412h1v1h-1zM95 412h1v1h-1zM105 412h1v1h-1zM115 412h1v1h-1zM125 412h1v1h-1zM135 412h1v1h-1zM145 412h1v1h-1zM155 412h1v1h-1zM165 412h1v1h-1zM175 412h1v1h-1zM185 412h1v1h-1zM195 412h1v1h-1zM205 412h1v1h-1zM215 412h1v1h-1zM225 412h1v1h-1zM235 412h1v1h-1zM245 412h1v1h-1zM255 412h1v1h-1zM265 412h1v1h-1zM275 412h1v1h-1zM285 412h1v1h-1zM295 412h1v1h-1zM305 412h1v1h-1zM315 412h1v1h-1zM325 412h1v1h-1zM335 412h1v1h-1zM345 412h1v1h-1zM355 412h1v1h-1zM365 412h1v1h-1zM385 412h1v1h-1zM395 412h1v1h-1zM405 412h1v1h-1zM415 412h1v1h-1zM425 412h1v1h-1zM435 412h1v1h-1zM445 412h1v1h-1zM455 412h1v1h-1zM465 412h1v1h-1zM475 412h1v1h-1zM485 412h1v1h-1zM495 412h1v1h-1zM505 412h1v1h-1zM515 412h1v1h-1z" fill="#c8c8c8"/><path d="M35 79h1v3h-1z M35 447h1v3h-1zM45 79h1v3h-1z M45 447h1v3h-1zM55 79h1v3h-1z M55 447h1v3h-1zM65 79h1v3h-1z M65 447h1v3h-1zM75 79h1v4h-1z M75 446h1v4h-1zM85 79h1v3h-1z M85 447h1v3h-1zM95 79h1v3h-1z M95 447h1v3h-1zM105 79h1v3h-1z M105 447h1v3h-1zM115 79h1v3h-1z M115 447h1v3h-1zM125 79h1v4h-1z M125 446h1v4h-1zM135 79h1v3h-1z M135 447h1v3h-1zM145 79h1v3h-1z M145 447h1v3h-1zM155 79h1v3h-1z M155 447h1v3h-1zM165 79h1v3h-1z M165 447h1v3h-1zM175 79h1v4h-1z M175 446h1v4h-1zM185 79h1v3h-1z M185 447h1v3h-1zM195 79h1v3h-1z M195 447h1v3h-1zM205 79h1v3h-1z M205 447h1v3h-1zM215 79h1v3h-1z M215 447h1v3h-1zM225 79h1v4h-1z M225 446h1v4h-1zM235 79h1v3h-1z M235 447h1v3h-1zM245 79h1v3h-1z M245 447h1v3h-1zM255 79h1v3h-1z M255 447h1v3h-1zM265 79h1v3h-1z M265 447h1v3h-1zM275 79h1v4h-1z M275 446h1v4h-1zM285 79h1v3h-1z M285 447h1v3h-1zM295 79h1v3h-1z M295 447h1v3h-1zM305 79h1v3h-1z M305 447h1v3h-1zM315 79h1v3h-1z M315 447h1v3h-1zM325 79h1v4h-1z M325 446h1v4h-1zM335 79h1v3h-1z M335 447h1v3h-1zM345 79h1v3h-1z M345 447h1v3h-1zM355 79h1v3h-1z M355 447h1v3h-1zM365 79h1v3h-1z M365 447h1v3h-1zM375 79h1v4h-1z M375 446h1v4h-1zM385 79h1v3h-1z M385 447h1v3h-1zM395 79h1v3h-1z M395 447h1v3h-1zM405 79h1v3h-1z M405 447h1v3h-1zM415 79h1v3h-1z M415 447h1v3h-1zM425 79h1v4h-1z M425 446h1v4h-1zM435 79h1v3h-1z M435 447h1v3h-1zM445 79h1v3h-1z M445 447h1v3h-1zM455 79h1v3h-1z M455 447h1v3h-1zM465 79h1v3h-1z M465 447h1v3h-1zM475 79h1v4h-1z M475 446h1v4h-1zM485 79h1v3h-1z M485 447h1v3h-1zM495 79h1v3h-1z M495 447h1v3h-1zM505 79h1v3h-1z M505 447h1v3h-1zM515 79h1v3h-1z M515 447h1v3h-1zM25 86h3v1h-3z M523 86h3v1h-3zM25 94h3v1h-3z M523 94h3v1h-3zM25 101h3v1h-3z M523 101h3v1h-3zM25 109h3v1h-3z M523 109h3v1h-3zM25 116h5v1h-5z M521 116h5v1h-5zM25 123h3v1h-3z M523 123h3v1h-3zM25 131h3v1h-3z M523 131h3v1h-3zM25 138h3v1h-3z M523 138h3v1h-3zM25 146h3v1h-3z M523 146h3v1h-3zM25 153h5v1h-5z M521 153h5v1h-5zM25 160h3v1h-3z M523 160h3v1h-3zM25 168h3v1h-3z M523 168h3v1h-3zM25 175h3v1h-3z M523 175h3v1h-3zM25 183h3v1h-3z M523 183h3v1h-3zM25 190h5v1h-5z M521 190h5v1h-5zM25 197h3v1h-3z M523 197h3v1h-3zM25 205h3v1h-3z M523 205h3v1h-3zM25 212h3v1h-3z M523 212h3v1h-3zM25 220h3v1h-3z M523 220h3v1h-3zM25 227h5v1h-5z M521 227h5v1h-5zM25 234h3v1h-3z M523 234h3v1h-3zM25 242h3v1h-3z M523 242h3v1h-3zM25 249h3v1h-3z M523 249h3v1h-3zM25 257h3v1h-3z M523 257h3v1h-3zM25 264h5v1h-5z M521 264h5v1h-5zM25 271h3v1h-3z M523 271h3v1h-3zM25 279h3v1h-3z M523 279h3v1h-3zM25 286h3v1h-3z M523 286h3v1h-3zM25 294h3v1h-3z M523 294h3v1h-3zM25 301h5v1h-5z M521 301h5v1h-5zM25 308h3v1h-3z M523 308h3v1h-3zM25 316h3v1h-3z M523 316h3v1h-3zM25 323h3v1h-3z M523 323h3v1h-3zM25 331h3v1h-3z M523 331h3v1h-3zM25 338h5v1h-5z M521 338h5v1h-5zM25 345h3v1h-3z M523 345h3v1h-3zM25 353h3v1h-3z M523 353h3v1h-3zM25 360h3v1h-3z M523 360h3v1h-3zM25 368h3v1h-3z M523 368h3v1h-3zM25 375h5v1h-5z M521 375h5v1h-5zM25 382h3v1h-3z M523 382h3v1h-3zM25 390h3v1h-3z M523 390h3v1h-3zM25 397h3v1h-3z M523 397h3v1h-3zM25 405h3v1h-3z M523 405h3v1h-3zM25 412h5v1h-5z M521 412h5v1h-5zM25 419h3v1h-3z M523 419h3v1h-3zM25 427h3v1h-3z M523 427h3v1h-3zM25 434h3v1h-3z M523 434h3v1h-3zM25 442h3v1h-3z M523 442h3v1h-3zM275 79h1v18h-1z M375 79h1v18h-1zM275 103h1v18h-1z M375 103h1v18h-1zM275 127h1v18h-1z M375 127h1v18h-1zM275 151h1v18h-1z M375 151h1v18h-1zM275 175h1v18h-1z M375 175h1v18h-1zM275 199h1v18h-1z M375 199h1v18h-1zM275 223h1v18h-1z M375 223h1v18h-1zM275 247h1v18h-1z M375 247h1v18h-1zM275 271h1v18h-1z M375 271h1v18h-1zM275 295h1v18h-1z M375 295h1v18h-1zM275 319h1v18h-1z M375 319h1v18h-1zM275 343h1v18h-1z M375 343h1v18h-1zM275 367h1v18h-1z M375 367h1v18h-1zM275 391h1v18h-1z M375 391h1v18h-1zM275 415h1v18h-1z M375 415h1v18h-1zM275 439h1v10h-1z M375 439h1v10h-1zM274 86h1v1h-1z M276 86h1v1h-1zM274 93h1v1h-1z M276 93h1v1h-1zM274 101h1v1h-1z M276 101h1v1h-1zM274 108h1v1h-1z M276 108h1v1h-1zM273 116h2v1h-2z M276 116h2v1h-2zM274 123h1v1h-1z M276 123h1v1h-1zM274 130h1v1h-1z M276 130h1v1h-1zM274 138h1v1h-1z M276 138h1v1h-1zM274 145h1v1h-1z M276 145h1v1h-1zM273 153h2v1h-2z M276 153h2v1h-2zM274 160h1v1h-1z M276 160h1v1h-1zM274 167h1v1h-1z M276 167h1v1h-1zM274 175h1v1h-1z M276 175h1v1h-1zM274 182h1v1h-1z M276 182h1v1h-1zM273 190h2v1h-2z M276 190h2v1h-2zM274 197h1v1h-1z M276 197h1v1h-1zM274 204h1v1h-1z M276 204h1v1h-1zM274 212h1v1h-1z M276 212h1v1h-1zM274 219h1v1h-1z M276 219h1v1h-1zM273 227h2v1h-2z M276 227h2v1h-2zM274 234h1v1h-1z M276 234h1v1h-1zM274 241h1v1h-1z M276 241h1v1h-1zM274 249h1v1h-1z M276 249h1v1h-1zM274 256h1v1h-1z M276 256h1v1h-1zM273 264h2v1h-2z M276 264h2v1h-2zM274 271h1v1h-1z M276 271h1v1h-1zM274 278h1v1h-1z M276 278h1v1h-1zM274 286h1v1h-1z M276 286h1v1h-1zM274 293h1v1h-1z M276 293h1v1h-1zM273 301h2v1h-2z M276 301h2v1h-2zM274 308h1v1h-1z M276 308h1v1h-1zM274 315h1v1h-1z M276 315h1v1h-1zM274 323h1v1h-1z M276 323h1v1h-1zM274 330h1v1h-1z M276 330h1v1h-1zM273 338h2v1h-2z M276 338h2v1h-2zM274 345h1v1h-1z M276 345h1v1h-1zM274 352h1v1h-1z M276 352h1v1h-1zM274 360h1v1h-1z M276 360h1v1h-1zM274 367h1v1h-1z M276 367h1v1h-1zM273 375h2v1h-2z M276 375h2v1h-2zM274 382h1v1h-1z M276 382h1v1h-1zM274 389h1v1h-1z M276 389h1v1h-1zM274 397h1v1h-1z M276 397h1v1h-1zM274 404h1v1h-1z M276 404h1v1h-1zM273 412h2v1h-2z M276 412h2v1h-2zM274 419h1v1h-1z M276 419h1v1h-1zM274 426h1v1h-1z M276 426h1v1h-1zM274 434h1v1h-1z M276 434h1v1h-1zM274 441h1v1h-1z M276 441h1v1h-1zM25 264h501v1h-501zM35 263h1v1h-1z M35 265h1v1h-1zM45 263h1v1h-1z M45 265h1v1h-1zM55 263h1v1h-1z M55 265h1v1h-1zM65 263h1v1h-1z M65 265h1v1h-1zM75 262h1v2h-1z M75 265h1v2h-1zM85 263h1v1h-1z M85 265h1v1h-1zM95 263h1v1h-1z M95 265h1v1h-1zM105 263h1v1h-1z M105 265h1v1h-1zM115 263h1v1h-1z M115 265h1v1h-1zM125 262h1v2h-1z M125 265h1v2h-1zM135 263h1v1h-1z M135 265h1v1h-1zM145 263h1v1h-1z M145 265h1v1h-1zM155 263h1v1h-1z M155 265h1v1h-1zM165 263h1v1h-1z M165 265h1v1h-1zM175 262h1v2h-1z M175 265h1v2h-1zM185 263h1v1h-1z M185 265h1v1h-1zM195 263h1v1h-1z M195 265h1v1h-1zM205 263h1v1h-1z M205 265h1v1h-1zM215 263h1v1h-1z M215 265h1v1h-1zM225 262h1v2h-1z M225 265h1v2h-1zM235 263h1v1h-1z M235 265h1v1h-1zM245 263h1v1h-1z M245 265h1v1h-1zM255 263h1v1h-1z M255 265h1v1h-1zM265 263h1v1h-1z M265 265h1v1h-1zM275 262h1v2h-1z M275 265h1v2h-1zM285 263h1v1h-1z M285 265h1v1h-1zM295 263h1v1h-1z M295 265h1v1h-1zM305 263h1v1h-1z M305 265h1v1h-1zM315 263h1v1h-1z M315 265h1v1h-1zM325 262h1v2h-1z M325 265h1v2h-1zM335 263h1v1h-1z M335 265h1v1h-1zM345 263h1v1h-1z M345 265h1v1h-1zM355 263h1v1h-1z M355 265h1v1h-1zM365 263h1v1h-1z M365 265h1v1h-1zM375 262h1v2h-1z M375 265h1v2h-1zM385 263h1v1h-1z M385 265h1v1h-1zM395 263h1v1h-1z M395 265h1v1h-1zM405 263h1v1h-1z M405 265h1v1h-1zM415 263h1v1h-1z M415 265h1v1h-1zM425 262h1v2h-1z M425 265h1v2h-1zM435 263h1v1h-1z M435 265h1v1h-1zM445 263h1v1h-1z M445 265h1v1h-1zM455 263h1v1h-1z M455 265h1v1h-1zM465 263h1v1h-1z M465 265h1v1h-1zM475 262h1v2h-1z M475 265h1v2h-1zM485 263h1v1h-1z M485 265h1v1h-1zM495 263h1v1h-1z M495 265h1v1h-1zM505 263h1v1h-1z M505 265h1v1h-1zM515 263h1v1h-1z M515 265h1v1h-1z" fill="#e0e0e0"/><rect x="25" y="79" width="7" height="13" fill="#800000"/></svg>
<div class="t" id="t18" style="left:29.20px;top:83.30px;font-size:10px;color:#fff;transform:scaleX(1.0140);transform-origin:0 0">192.6Ω</div>
<div class="t" id="t19" style="left:27.00px;top:436.20px;font-size:10px;color:#fff;transform:scaleX(1.0700);transform-origin:0 0">12.80Ω</div>
<div class="t" style="left:41.00px;top:436.00px;font-size:10px;color:#fff;font-weight:bold">M1</div>
<div class="t" id="t21" style="left:464.90px;top:436.05px;font-size:10px;color:#fff;transform:scaleX(1.0845);transform-origin:0 0">700.0ps/div</div>
<svg class="a" style="left:0px;top:0px" width="640" height="480" viewBox="0 0 640 480"><defs><clipPath id="gc"><rect x="25" y="79" width="501" height="371"/></clipPath></defs><g clip-path="url(#gc)"><path d="M25.0 264.82 L27.0 264.62 L29.1 265.10 L31.1 264.49 L33.1 264.93 L35.1 264.73 L37.2 264.40 L39.2 264.82 L41.2 264.32 L43.2 264.69 L45.3 264.30 L47.3 264.29 L49.3 264.60 L51.4 264.98 L53.4 264.25 L55.4 264.32 L57.4 264.70 L59.5 264.99 L61.5 264.59 L63.5 264.38 L65.5 264.94 L67.6 263.98 L69.6 264.76 L71.6 264.17 L73.6 264.00 L75.7 263.94 L77.7 264.11 L79.7 264.59 L81.8 263.92 L83.8 264.30 L85.8 264.33 L87.8 264.03 L89.9 264.18 L91.9 263.67 L93.9 263.64 L95.9 263.76 L98.0 264.21 L100.0 263.93 L102.0 263.80 L104.0 264.06 L106.0 263.92 L108.0 263.75 L110.0 264.23 L112.0 264.12 L114.0 263.66 L116.0 263.97 L118.0 263.91 L120.0 264.25 L122.0 264.09 L124.0 263.64 L126.0 264.32 L128.0 263.44 L130.0 263.73 L132.0 264.06 L134.0 263.44 L136.0 263.76 L138.0 263.30 L140.0 263.92 L142.0 264.00 L144.0 263.80 L146.0 264.09 L148.0 263.51 L150.0 263.88 L152.0 263.77 L154.0 263.74 L156.0 263.61 L158.0 263.98 L160.0 264.07 L162.0 263.59 L164.0 263.76 L166.0 263.15 L168.0 263.78 L170.0 263.71 L172.0 264.04 L174.0 263.86 L176.0 263.31 L178.0 263.40 L180.0 263.67 L182.0 262.99 L184.0 263.39 L186.0 263.06 L188.0 262.97 L190.0 262.87 L192.0 263.54 L194.0 262.87 L196.0 262.95 L198.0 263.05 L200.0 263.50 L202.0 262.67 L204.0 263.00 L206.0 263.06 L208.0 263.36 L210.0 263.26 L212.0 263.26 L214.0 262.64 L216.0 262.74 L218.0 262.65 L220.0 263.13 L222.0 263.17 L224.0 262.33 L226.0 262.31 L228.0 262.33 L230.0 262.30 L232.0 262.51 L234.0 262.58 L236.0 262.21 L238.0 261.92 L240.0 262.29 L242.0 262.21 L244.0 262.37 L246.0 262.72 L248.0 262.42 L250.0 262.20 L252.0 262.27 L254.0 262.29 L256.0 261.63 L258.0 262.44 L260.0 262.28 L262.0 262.36 L264.0 262.26 L266.0 261.84 L268.0 261.83 L270.0 261.52 L272.0 262.03 L274.0 261.45 L276.0 261.43 L278.0 261.56 L280.0 261.50 L282.0 261.66 L284.0 261.35 L286.0 261.28 L288.0 261.42 L290.0 261.35 L292.0 261.60 L294.0 261.24 L296.0 262.07 L298.0 261.80 L300.0 261.32 L302.0 261.40 L304.0 261.48 L306.0 261.48 L308.0 261.22 L310.0 261.93 L312.0 262.06 L314.0 261.52 L316.0 261.52 L318.0 261.10 L320.0 261.10 L322.0 261.33 L324.0 261.23 L326.0 261.78 L328.0 261.09 L330.0 260.94 L332.0 261.85 L334.0 261.41 L336.0 261.01 L338.0 261.39 L340.0 260.86 L342.0 261.34 L344.0 261.78 L346.0 261.65 L348.0 261.46 L350.0 261.01 L352.0 261.10 L354.0 260.88 L356.0 261.47 L358.0 261.22 L360.0 261.45 L362.0 260.98 L364.0 260.86 L366.0 261.43 L368.0 261.58 L370.0 261.44 L372.0 261.37 L374.0 261.37 L376.0 261.27 L378.0 260.74 L380.0 261.02 L382.0 260.86 L384.0 260.53 L386.1 260.53 L388.1 260.78 L390.1 260.76 L392.1 261.19 L394.1 261.46 L396.1 260.95 L398.2 261.44 L400.2 261.49 L402.2 261.46 L404.2 260.86 L406.2 260.72 L408.2 260.73 L410.3 260.70 L412.3 260.70 L414.3 261.12 L416.3 261.40 L418.3 261.34 L420.4 260.98 L422.4 261.15 L424.4 261.30 L426.4 260.58 L428.4 261.16 L430.4 261.41 L432.5 261.28 L434.5 261.25 L436.5 260.98 L438.5 260.68 L440.5 261.29 L442.5 260.83 L444.6 261.30 L446.6 261.47 L448.6 260.90 L450.6 260.90 L452.6 261.45 L454.6 261.22 L456.7 260.67 L458.7 260.63 L460.7 260.65 L462.7 261.40 L464.7 261.31 L466.8 260.65 L468.8 261.33 L470.8 261.48 L472.8 261.16 L474.8 260.85 L476.8 261.05 L478.9 260.63 L480.9 260.51 L482.9 261.47 L484.9 261.15 L486.9 261.03 L488.9 261.43 L491.0 260.93 L493.0 261.37 L495.0 261.33 L497.2 260.21 L499.5 260.00 L501.8 259.50 L504.0 259.00 L506.1 257.50 L508.3 256.00 L509.3 254.00 L510.2 252.00 L511.2 250.00 L511.5 248.00 L511.8 246.00 L512.1 244.00 L512.4 242.00 L512.7 240.00 L513.0 238.00 L513.3 236.00 L513.6 234.00 L513.9 232.00 L514.2 230.00 L514.4 228.00 L514.6 226.00 L514.8 224.00 L514.9 222.00 L515.1 220.00 L515.3 218.00 L515.5 216.00 L515.7 214.00 L515.9 212.00 L516.1 210.00 L516.3 208.00 L516.4 206.00 L516.6 204.00 L516.8 202.00 L517.0 200.00 L517.2 197.95 L517.5 195.91 L517.8 193.86 L518.0 191.82 L518.2 189.77 L518.5 187.73 L518.8 185.68 L519.0 183.64 L519.2 181.59 L519.5 179.55 L519.8 177.50 L520.0 175.45 L520.2 173.41 L520.5 171.36 L520.8 169.32 L521.0 167.27 L521.2 165.23 L521.5 163.18 L521.8 161.14 L522.0 159.09 L522.2 157.05 L522.5 155.00 L522.9 152.86 L523.2 150.71 L523.6 148.57 L523.9 146.43 L524.3 144.29 L524.6 142.14 L525.0 140.00 L525.5 137.75 L526.0 135.50 L526.5 133.25 L527.0 131.00" stroke="#ff30ff" stroke-width="1.7" fill="none" stroke-linejoin="round"/><path d="M25.0 262.75 L27.0 262.78 L29.1 262.71 L31.1 263.05 L33.1 262.71 L35.1 262.85 L37.2 262.55 L39.2 263.32 L41.2 262.75 L43.2 262.84 L45.3 262.95 L47.3 263.26 L49.3 262.76 L51.4 263.24 L53.4 262.81 L55.4 262.83 L57.4 262.81 L59.5 262.29 L61.5 262.70 L63.5 262.43 L65.5 262.23 L67.6 263.02 L69.6 262.38 L71.6 262.66 L73.6 262.90 L75.7 262.72 L77.7 262.47 L79.7 262.65 L81.8 262.68 L83.8 262.89 L85.8 262.20 L87.8 262.64 L89.9 262.32 L91.9 262.33 L93.9 262.81 L95.9 262.53 L98.0 262.58 L100.0 262.76 L102.0 262.90 L104.0 262.43 L106.0 262.59 L108.0 262.48 L110.0 262.47 L112.0 262.65 L114.0 262.40 L116.0 262.47 L118.0 262.41 L120.0 262.87 L122.0 262.62 L124.0 262.79 L126.0 262.84 L128.0 262.15 L130.0 262.45 L132.0 262.82 L134.0 262.71 L136.0 262.00 L138.0 261.98 L140.0 262.29 L142.0 261.92 L144.0 262.08 L146.0 261.90 L148.0 262.49 L150.0 262.60 L152.0 262.70 L154.0 261.95 L156.0 262.51 L158.0 262.44 L160.0 261.92 L162.0 262.65 L164.0 262.73 L166.0 261.97 L168.0 262.70 L170.0 262.14 L172.0 262.22 L174.0 262.71 L176.0 262.55 L178.0 261.87 L180.0 262.13 L182.0 262.19 L184.0 261.98 L186.0 261.81 L188.0 261.90 L190.0 262.27 L192.0 261.54 L194.0 262.04 L196.0 261.90 L198.0 261.45 L200.0 261.73 L202.0 261.99 L204.0 261.85 L206.0 261.37 L208.0 262.27 L210.0 262.04 L212.0 262.19 L214.0 261.29 L216.0 261.43 L218.0 261.17 L220.0 261.88 L222.0 261.34 L224.0 261.17 L226.0 261.43 L228.0 261.89 L230.0 261.77 L232.0 261.18 L234.0 261.04 L236.0 261.78 L238.0 261.40 L240.0 261.50 L242.0 260.86 L244.0 260.80 L246.0 261.40 L248.0 261.11 L250.0 260.72 L252.0 261.56 L254.0 261.22 L256.0 261.36 L258.0 260.61 L260.0 261.36 L262.0 260.54 L264.0 261.31 L266.0 260.88 L268.0 260.74 L270.0 260.93 L272.0 261.28 L274.0 260.59 L276.0 260.43 L278.0 260.80 L280.0 260.49 L282.0 260.33 L284.0 260.36 L286.0 260.23 L288.0 260.35 L290.0 260.44 L292.0 260.41 L294.0 260.83 L296.0 260.34 L298.0 260.53 L300.0 260.18 L302.0 260.32 L304.0 259.97 L306.0 260.18 L308.0 259.92 L310.0 260.61 L312.0 260.40 L314.0 260.01 L316.0 260.27 L318.0 260.71 L320.0 259.86 L322.0 260.54 L324.0 260.13 L326.0 260.17 L328.0 260.48 L330.0 260.02 L332.0 260.11 L334.0 260.26 L336.0 260.53 L338.0 259.87 L340.0 260.33 L342.0 260.18 L344.0 260.09 L346.0 259.83 L348.0 259.75 L350.0 259.43 L352.0 259.48 L354.0 259.40 L356.0 260.04 L358.0 259.53 L360.0 259.41 L362.0 259.31 L364.0 260.04 L366.0 260.05 L368.0 259.82 L370.0 259.41 L372.0 259.34 L374.0 259.37 L376.0 259.51 L378.0 259.18 L380.0 259.45 L382.0 259.27 L384.0 259.98 L386.1 260.00 L388.1 259.58 L390.1 259.29 L392.1 260.02 L394.1 259.37 L396.1 259.43 L398.2 259.08 L400.2 259.47 L402.2 259.57 L404.2 259.61 L406.2 259.32 L408.2 259.63 L410.3 259.14 L412.3 259.40 L414.3 259.24 L416.3 259.56 L418.3 259.21 L420.4 259.20 L422.4 259.49 L424.4 259.43 L426.4 259.79 L428.4 259.74 L430.4 259.97 L432.5 259.89 L434.5 259.95 L436.5 260.12 L438.5 259.64 L440.5 259.59 L442.5 260.26 L444.6 259.43 L446.6 260.01 L448.6 259.94 L450.6 259.35 L452.6 260.15 L454.6 260.22 L456.7 259.96 L458.7 260.08 L460.7 260.16 L462.7 259.50 L464.7 259.89 L466.8 259.88 L468.8 260.22 L470.8 260.20 L472.8 260.23 L474.8 260.00 L476.8 260.31 L478.9 260.11 L480.9 260.13 L482.9 259.68 L484.9 259.49 L486.9 259.60 L488.9 259.83 L491.0 259.59 L493.0 260.33 L495.0 260.06 L497.5 259.63 L500.0 259.00 L502.5 258.50 L504.7 257.25 L506.9 256.00 L507.9 254.00 L508.8 252.00 L509.8 250.00 L510.1 248.00 L510.4 246.00 L510.7 244.00 L511.0 242.00 L511.2 240.00 L511.5 238.00 L511.8 236.00 L512.1 234.00 L512.4 232.00 L512.7 230.00 L513.0 228.00 L513.4 226.00 L513.7 224.00 L514.0 222.00 L514.3 220.00 L514.7 218.00 L515.0 216.00 L515.3 214.00 L515.6 212.00 L516.0 210.00 L516.3 208.00 L516.5 206.00 L516.6 204.00 L516.8 202.00 L517.0 200.00 L517.1 198.00 L517.3 196.00 L517.5 194.00 L517.6 192.00 L517.8 190.00 L518.0 188.00 L518.1 186.00 L518.3 184.00 L518.5 182.00 L518.6 180.00 L518.8 178.00 L519.0 176.00 L519.2 174.00 L519.3 172.00 L519.5 170.00 L519.7 168.00 L519.8 166.00 L520.0 164.00 L520.2 162.00 L520.3 160.00 L520.5 158.00 L520.7 156.00 L520.8 154.00 L521.0 152.00 L521.3 149.92 L521.5 147.85 L521.8 145.77 L522.1 143.69 L522.3 141.62 L522.6 139.54 L522.9 137.46 L523.2 135.38 L523.4 133.31 L523.7 131.23 L524.0 129.15 L524.2 127.08 L524.5 125.00 L525.0 123.00 L525.5 121.00 L526.0 119.00 L526.5 117.00" stroke="#30f0f8" stroke-width="1.7" fill="none" stroke-linejoin="round"/><path d="M25.0 269.15 L27.0 269.18 L29.1 268.91 L31.1 268.28 L33.1 269.20 L35.1 269.10 L37.2 268.76 L39.2 268.76 L41.2 268.87 L43.2 268.11 L45.3 268.88 L47.3 268.26 L49.3 268.00 L51.4 268.19 L53.4 268.71 L55.4 268.04 L57.4 268.64 L59.5 268.88 L61.5 268.26 L63.5 268.09 L65.5 268.16 L67.6 268.37 L69.6 268.43 L71.6 268.21 L73.6 268.20 L75.7 267.48 L77.7 267.52 L79.7 267.61 L81.8 268.16 L83.8 267.59 L85.8 267.87 L87.8 267.16 L89.9 267.18 L91.9 267.38 L93.9 267.83 L95.9 267.81 L98.0 267.75 L100.0 267.25 L102.0 267.51 L104.0 267.43 L106.0 267.42 L108.0 266.99 L110.0 267.91 L112.0 267.06 L114.0 267.99 L116.0 267.92 L118.0 266.81 L120.0 267.33 L122.0 267.75 L124.0 267.91 L126.0 267.28 L128.0 267.05 L130.0 266.96 L132.0 267.83 L134.0 266.94 L136.0 267.37 L138.0 266.83 L140.0 267.28 L142.0 267.78 L144.0 266.78 L146.0 267.60 L148.0 267.21 L150.0 267.65 L152.0 267.42 L154.0 266.84 L156.0 267.63 L158.0 267.12 L160.0 266.55 L162.0 266.52 L164.0 267.09 L166.0 267.03 L168.0 266.84 L170.0 266.63 L172.0 266.86 L174.0 266.82 L176.0 267.43 L178.0 266.41 L180.0 267.30 L182.0 267.36 L184.0 266.44 L186.0 267.36 L188.0 267.06 L190.0 267.23 L192.0 266.45 L194.0 266.50 L196.0 266.47 L198.0 267.15 L200.0 266.61 L202.0 266.28 L204.0 266.31 L206.0 266.08 L208.0 265.76 L210.0 265.77 L212.0 266.60 L214.0 265.89 L216.0 266.62 L218.0 265.75 L220.0 265.72 L222.0 265.96 L224.0 265.53 L226.0 265.70 L228.0 266.35 L230.0 266.21 L232.0 266.07 L234.0 265.81 L236.0 266.10 L238.0 266.08 L240.0 265.56 L242.0 265.71 L244.0 264.86 L246.0 265.63 L248.0 265.24 L250.0 265.55 L252.0 265.37 L254.0 264.89 L256.0 264.56 L258.0 265.56 L260.0 264.55 L262.0 264.87 L264.0 264.61 L266.0 264.46 L268.0 264.89 L270.0 265.07 L272.0 264.11 L274.0 264.49 L276.0 263.96 L278.0 264.17 L280.0 263.87 L282.0 263.50 L284.0 263.39 L286.0 263.35 L288.0 264.09 L290.0 263.50 L292.0 263.06 L294.0 263.79 L296.0 263.80 L298.0 263.04 L300.0 262.57 L302.0 262.53 L304.0 262.31 L306.0 262.51 L308.0 262.11 L310.0 262.19 L312.0 262.11 L314.0 262.38 L316.0 262.66 L318.0 262.40 L320.0 261.90 L322.0 261.83 L324.0 261.90 L326.0 261.65 L328.0 261.54 L330.0 261.14 L332.0 261.33 L334.0 262.09 L336.0 261.02 L338.0 261.40 L340.0 261.49 L342.0 261.70 L344.0 260.86 L346.0 260.86 L348.0 260.76 L350.0 260.88 L352.0 260.87 L354.0 261.41 L356.0 261.22 L358.0 261.18 L360.0 260.09 L362.0 260.04 L364.0 260.78 L366.0 260.94 L368.0 260.37 L370.0 260.44 L372.0 259.67 L374.0 260.07 L376.0 260.65 L378.0 260.46 L380.0 260.43 L382.0 260.56 L384.0 259.68 L386.0 259.50 L388.0 259.55 L390.1 259.98 L392.1 260.17 L394.1 260.47 L396.1 260.20 L398.1 260.10 L400.1 260.23 L402.1 259.85 L404.1 259.96 L406.2 259.34 L408.2 260.22 L410.2 259.55 L412.2 260.37 L414.2 260.03 L416.2 259.61 L418.2 259.39 L420.2 259.53 L422.3 259.98 L424.3 260.05 L426.3 259.34 L428.3 259.28 L430.3 259.81 L432.3 259.88 L434.3 259.63 L436.3 259.43 L438.4 259.87 L440.4 259.15 L442.4 259.49 L444.4 259.68 L446.4 260.27 L448.4 259.88 L450.4 260.16 L452.4 259.66 L454.4 259.36 L456.5 259.37 L458.5 260.22 L460.5 259.90 L462.5 259.42 L464.5 259.06 L466.5 259.63 L468.5 259.83 L470.5 259.52 L472.6 259.31 L474.6 259.80 L476.6 260.10 L478.6 259.25 L480.6 259.01 L482.6 259.37 L484.6 259.46 L486.6 259.76 L488.7 259.17 L490.7 259.88 L492.7 259.80 L494.7 259.51 L496.7 259.15 L499.2 258.75 L501.8 258.00 L503.6 256.50 L505.4 255.00 L506.9 252.50 L508.3 250.00 L508.5 248.00 L508.7 246.00 L509.0 244.00 L509.2 242.00 L509.4 240.00 L509.6 238.00 L509.8 236.00 L510.1 234.00 L510.3 232.00 L510.5 230.00 L510.6 228.00 L510.7 226.00 L510.8 224.00 L510.9 222.00 L511.0 220.00 L511.1 218.00 L511.2 216.00 L511.3 214.00 L511.4 212.00 L511.5 210.00 L511.6 208.00 L511.7 206.00 L511.8 204.00 L511.9 202.00 L512.0 200.00 L512.1 197.95 L512.3 195.91 L512.4 193.86 L512.5 191.82 L512.7 189.77 L512.8 187.73 L513.0 185.68 L513.1 183.64 L513.2 181.59 L513.4 179.55 L513.5 177.50 L513.6 175.45 L513.8 173.41 L513.9 171.36 L514.0 169.32 L514.2 167.27 L514.3 165.23 L514.5 163.18 L514.6 161.14 L514.7 159.09 L514.9 157.05 L515.0 155.00 L515.1 152.95 L515.3 150.89 L515.4 148.84 L515.5 146.79 L515.7 144.74 L515.8 142.68 L516.0 140.63 L516.1 138.58 L516.2 136.53 L516.4 134.47 L516.5 132.42 L516.6 130.37 L516.8 128.32 L516.9 126.26 L517.1 124.21 L517.2 122.16 L517.3 120.11 L517.5 118.05 L517.6 116.00 L517.7 113.94 L517.8 111.89 L517.8 109.83 L517.9 107.78 L518.0 105.72 L518.1 103.67 L518.1 101.61 L518.2 99.56 L518.3 97.50 L518.4 95.44 L518.5 93.39 L518.5 91.33 L518.6 89.28 L518.7 87.22 L518.8 85.17 L518.8 83.11 L518.9 81.06 L519.0 79.00" stroke="#ffffff" stroke-width="1.7" fill="none" stroke-linejoin="round"/></g></svg>
<div class="t" id="t22" style="left:141.50px;top:257.00px;font-size:14px;color:#ff30ff;font-family:'Liberation Serif',serif;font-weight:bold;-webkit-text-stroke:0.5px #ff30ff">C3</div>
<div class="t" id="t23" style="left:192.00px;top:257.00px;font-size:14px;color:#30f0f8;font-family:'Liberation Serif',serif;font-weight:bold;-webkit-text-stroke:0.5px #30f0f8">C4</div>
<div class="a" style="left:0;top:350px;width:18px;height:15px;background:#c0c0c0;border-top:1px solid #fff;border-bottom:1px solid #000"></div>
<div class="a" style="left:2px;top:366px;width:18px;height:1px;background:#000"></div>
<div class="t" id="t24" style="left:2.00px;top:351.00px;font-size:12px;;transform:scaleX(0.8900);transform-origin:0 0">C4</div>
<svg class="a" style="left:0px;top:345px" width="26" height="24" viewBox="0 0 26 24"><path d="M17.5 5 L23.8 12.3 L17.5 19.6 Z" fill="#00ffff" stroke="#000" stroke-width="1"/><path d="M19.5 21.5 L24 16.5" stroke="#000" stroke-width="0.8" stroke-dasharray="1 1"/></svg>
<div class="a" style="left:0;top:426px;width:16px;height:19px;background:#fff;border-right:1px solid #000"></div>
<div class="t" id="t25" style="left:0.00px;top:430.00px;font-size:12px;;transform:scaleX(0.8600);transform-origin:0 0">M1</div>
<svg class="a" style="left:0px;top:443px" width="20" height="10" viewBox="0 0 20 10"><path d="M1 1.5 L7.5 7.8 L14 1.5" fill="#fff" stroke="#000" stroke-width="1.2"/></svg>
<div class="a" style="left:528px;top:76px;width:1px;height:376px;background:#fff"></div>
<div class="a" style="left:532px;top:77px;width:102px;height:14px;background:#808080"></div>
<div class="t" id="t26" style="left:534.00px;top:78.30px;font-size:12px;font-weight:bold;color:#c8c8c8;transform:scaleX(1.0370);transform-origin:0 0">Waveform</div>
<div class="a" style="left:532px;top:92px;width:102px;height:22px;background:#c0c0c0;border-top:1px solid #fff;border-left:1px solid #fff;border-right:1px solid #000;border-bottom:1px solid #000;box-shadow:inset -1px -1px 0 #808080"></div>
<div class="a" style="left:534px;top:94px;width:6px;height:18px;background:#ff00ff"></div>
<div class="t" id="t27" style="left:542.00px;top:97.65px;font-size:11px;">C3 20.00Ω/div</div>
<div class="a" style="left:532px;top:114px;width:102px;height:22px;background:#c0c0c0;border-top:1px solid #fff;border-left:1px solid #fff;border-right:1px solid #000;border-bottom:1px solid #000;box-shadow:inset -1px -1px 0 #808080"></div>
<div class="a" style="left:534px;top:116px;width:6px;height:18px;background:#00ffff"></div>
<div class="t" id="t28" style="left:542.00px;top:119.65px;font-size:11px;">C4 20.00Ω/div</div>
<div class="a" style="left:532px;top:136px;width:102px;height:21px;background:#c0c0c0;border-top:1px solid #000;border-left:1px solid #000;border-right:1px solid #fff;border-bottom:1px solid #fff;box-shadow:inset 1px 1px 0 #404040"></div>
<div class="a" style="left:534px;top:138px;width:6px;height:18px;background:#ffffff"></div>
<div class="t" id="t29" style="left:542.00px;top:141.65px;font-size:11px;;transform:scaleX(0.9787);transform-origin:0 0">M1 18.00Ω/div</div>
<div class="a" style="left:532px;top:164px;width:102px;height:16px;background:#808080"></div>
<div class="t" id="t30" style="left:533.00px;top:165.30px;font-size:12px;font-weight:bold;color:#c8c8c8;transform:scaleX(1.0467);transform-origin:0 0">Measurement</div>
<div class="a" style="left:532px;top:180px;width:102px;height:31px;background:#c0c0c0;border-top:1px solid #000;border-left:1px solid #000;border-right:1px solid #fff;border-bottom:1px solid #fff;box-shadow:inset 1px 1px 0 #404040"></div>
<div class="a" style="left:534px;top:182px;width:6px;height:28px;background:#fff"></div>
<div class="t" style="left:535.00px;top:184.00px;font-size:11px;">1</div>
<div class="t" id="t32" style="left:542.00px;top:183.30px;font-size:11px;;transform:scaleX(1.0307);transform-origin:0 0">Max</div>
<div class="t" id="t33" style="left:575.60px;top:183.30px;font-size:11px;;transform:scaleX(0.9767);transform-origin:0 0">M1</div>
<svg class="a" style="left:602px;top:182px" width="16" height="15" viewBox="0 0 16 15"><path d="M1.3 10.4 L3.5 10 L4.6 6.5 L5.2 2.5 L6.5 1.3 L7.8 2.5 L9 6 L10.3 10.5 L11.5 12.5 L14.5 10.2" stroke="#000" stroke-width="1.2" fill="none" stroke-linejoin="round"/></svg>
<div class="t" id="t34" style="left:561.50px;top:196.60px;font-size:11px;">104.8082Ω</div>
<div class="a" style="left:532px;top:211px;width:102px;height:33px;background:#c0c0c0;border-top:1px solid #fff;border-left:1px solid #fff;border-right:1px solid #000;border-bottom:1px solid #000;box-shadow:inset -1px -1px 0 #808080"></div>
<div class="a" style="left:534px;top:213px;width:6px;height:28px;background:#fff"></div>
<div class="t" style="left:535.00px;top:215.00px;font-size:11px;">2</div>
<div class="t" id="t36" style="left:542.00px;top:214.30px;font-size:11px;;transform:scaleX(0.9381);transform-origin:0 0">Min</div>
<div class="t" id="t37" style="left:575.60px;top:214.30px;font-size:11px;;transform:scaleX(0.9767);transform-origin:0 0">M1</div>
<svg class="a" style="left:602px;top:213px" width="16" height="15" viewBox="0 0 16 15"><path d="M1.3 10.4 L3.5 10 L4.6 6.5 L5.2 2.5 L6.5 1.3 L7.8 2.5 L9 6 L10.3 10.5 L11.5 12.5 L14.5 10.2" stroke="#000" stroke-width="1.2" fill="none" stroke-linejoin="round"/></svg>
<div class="t" id="t38" style="left:561.50px;top:227.60px;font-size:11px;;transform:scaleX(1.0081);transform-origin:0 0">102.5608Ω</div>
<div class="a" style="left:532px;top:244px;width:102px;height:33px;background:#c0c0c0;border-top:1px solid #fff;border-left:1px solid #fff;border-right:1px solid #000;border-bottom:1px solid #000;box-shadow:inset -1px -1px 0 #808080"></div>
<div class="a" style="left:534px;top:246px;width:6px;height:28px;background:#fff"></div>
<div class="t" style="left:535.00px;top:248.00px;font-size:11px;">3</div>
<div class="t" id="t40" style="left:542.00px;top:247.30px;font-size:11px;;transform:scaleX(0.9618);transform-origin:0 0">Mean</div>
<div class="t" id="t41" style="left:575.60px;top:247.30px;font-size:11px;;transform:scaleX(0.9767);transform-origin:0 0">M1</div>
<svg class="a" style="left:602px;top:246px" width="16" height="15" viewBox="0 0 16 15"><path d="M1.3 10.4 L3.5 10 L4.6 6.5 L5.2 2.5 L6.5 1.3 L7.8 2.5 L9 6 L10.3 10.5 L11.5 12.5 L14.5 10.2" stroke="#000" stroke-width="1.2" fill="none" stroke-linejoin="round"/></svg>
<div class="t" id="t42" style="left:561.50px;top:260.60px;font-size:11px;;transform:scaleX(1.0081);transform-origin:0 0">103.6823Ω</div>
<div class="a" style="left:0;top:452px;width:640px;height:1px;background:#fff"></div>
<div class="a" style="left:0px;top:454px;width:45px;height:23px;background:#c0c0c0;border-top:1px solid #fff;border-left:1px solid #fff;border-right:1px solid #000;border-bottom:1px solid #000;box-shadow:inset -1px -1px 0 #808080;"></div>
<div class="a" style="left:1px;top:456px;width:6px;height:19px;background:#fff"></div>
<div class="t" id="t43" style="left:8.80px;top:460.00px;font-size:12px;;transform:scaleX(0.9406);transform-origin:0 0">M1</div>
<svg class="a" style="left:28px;top:458px" width="14" height="12" viewBox="0 0 14 12"><path d="M2 8.8 H11 L6.5 4.5 Z" fill="#000"/></svg>
<div class="a" style="left:51px;top:454px;width:82px;height:22px;background:#c0c0c0;border-top:1px solid #808080;border-left:1px solid #808080;border-right:1px solid #fff;border-bottom:1px solid #fff"></div><div class="a" style="left:52px;top:455px;width:80px;height:20px;border:1px solid #000"></div><div class="a" style="left:53px;top:456px;width:50px;height:18px;background:#fff"></div><div class="a" style="left:0;top:0;width:640px;height:480px;clip:rect(456px,103px,474px,53px)"><div class="t" id="t44" style="left:55.60px;top:459.40px;font-size:12px;color:#000;transform:scaleX(0.8900);transform-origin:0 0">18.00Ω/di</div></div><div class="a" style="left:103px;top:456px;width:14px;height:18px;background:#c0c0c0;border-top:1px solid #fff;border-left:1px solid #fff;border-right:1px solid #000;border-bottom:1px solid #000;"></div><svg class="a" style="left:103px;top:456px" width="14" height="18" viewBox="0 0 14 18"><rect x="2.6" y="4.1" width="8.4" height="9.4" fill="none" stroke="#000" stroke-width="1.2"/><rect x="4.6" y="6.2" width="4.4" height="2.2" rx="1" fill="#fff" stroke="#000" stroke-width="0.9"/><path d="M4.5 10.5h1.5v1.5h-1.5zM7.6 10.5h1.5v1.5h-1.5z" fill="#000"/></svg><div class="a" style="left:118px;top:456px;width:13px;height:8px;background:#c0c0c0;border-top:1px solid #fff;border-left:1px solid #fff;border-right:1px solid #000;border-bottom:1px solid #000;"></div><div class="a" style="left:118px;top:465px;width:13px;height:9px;background:#c0c0c0;border-top:1px solid #fff;border-left:1px solid #fff;border-right:1px solid #000;border-bottom:1px solid #000;"></div><div class="a" style="left:118px;top:464px;width:13px;height:1px;background:#000"></div><svg class="a" style="left:118px;top:456px" width="14" height="18" viewBox="0 0 14 18"><path d="M5.3 5.5 h3.2 l-1.6 -1.6z M5.3 12.6 h3.2 l-1.6 1.6z" fill="#000"/></svg>
<div class="a" style="left:137px;top:454px;width:81px;height:22px;background:#c0c0c0;border-top:1px solid #808080;border-left:1px solid #808080;border-right:1px solid #fff;border-bottom:1px solid #fff"></div><div class="a" style="left:138px;top:455px;width:79px;height:20px;border:1px solid #000"></div><div class="a" style="left:139px;top:456px;width:49px;height:18px;background:#c0c0c0"></div><div class="a" style="left:0;top:0;width:640px;height:480px;clip:rect(456px,188px,474px,139px)"><div class="t" id="t45" style="left:141.50px;top:459.20px;font-size:12px;color:#808080;text-shadow:1px 1px 0 #e8e8e8;transform:scaleX(0.9200);transform-origin:0 0">0.0Ω</div></div><div class="a" style="left:188px;top:456px;width:14px;height:18px;background:#c0c0c0;border-top:1px solid #fff;border-left:1px solid #fff;border-right:1px solid #000;border-bottom:1px solid #000;"></div><svg class="a" style="left:188px;top:456px" width="14" height="18" viewBox="0 0 14 18"><rect x="2.6" y="4.1" width="8.4" height="9.4" fill="none" stroke="#000" stroke-width="1.2"/><rect x="4.6" y="6.2" width="4.4" height="2.2" rx="1" fill="#fff" stroke="#000" stroke-width="0.9"/><path d="M4.5 10.5h1.5v1.5h-1.5zM7.6 10.5h1.5v1.5h-1.5z" fill="#000"/></svg><div class="a" style="left:203px;top:456px;width:13px;height:8px;background:#c0c0c0;border-top:1px solid #fff;border-left:1px solid #fff;border-right:1px solid #000;border-bottom:1px solid #000;"></div><div class="a" style="left:203px;top:465px;width:13px;height:9px;background:#c0c0c0;border-top:1px solid #fff;border-left:1px solid #fff;border-right:1px solid #000;border-bottom:1px solid #000;"></div><div class="a" style="left:203px;top:464px;width:13px;height:1px;background:#000"></div><svg class="a" style="left:203px;top:456px" width="14" height="18" viewBox="0 0 14 18"><path d="M5.3 5.5 h3.2 l-1.6 -1.6z M5.3 12.6 h3.2 l-1.6 1.6z" fill="#808080"/></svg>
<div class="a" style="left:227px;top:454px;width:30px;height:22px;background:#fff;border-top:1px solid #000;border-left:1px solid #000;border-right:1px solid #fff;border-bottom:1px solid #fff;box-shadow:inset 1px 1px 0 #808080"></div>
<div class="t" id="t46" style="left:230.90px;top:460.35px;font-size:12px;;transform:scaleX(0.9162);transform-origin:0 0">Main</div>
<div class="a" style="left:257px;top:454px;width:29px;height:22px;background:#c0c0c0;border-top:1px solid #fff;border-left:1px solid #fff;border-right:1px solid #000;border-bottom:1px solid #000;box-shadow:inset -1px -1px 0 #808080;"></div>
<svg class="a" style="left:257px;top:454px" width="29" height="22" viewBox="0 0 29 22"><circle cx="12.2" cy="8.8" r="5.6" fill="none" stroke="#000" stroke-width="1.6"/><path d="M16.2 12.8 L22.3 18.8" stroke="#000" stroke-width="2.8"/><text x="9.3" y="12.6" font-size="10.5" font-weight="bold" font-family="Liberation Sans">1</text></svg>
<div class="a" style="left:287px;top:454px;width:29px;height:22px;background:#c0c0c0;border-top:1px solid #fff;border-left:1px solid #fff;border-right:1px solid #000;border-bottom:1px solid #000;box-shadow:inset -1px -1px 0 #808080;"></div>
<svg class="a" style="left:287px;top:454px" width="29" height="22" viewBox="0 0 29 22"><circle cx="12.2" cy="8.8" r="5.6" fill="none" stroke="#000" stroke-width="1.6"/><path d="M16.2 12.8 L22.3 18.8" stroke="#000" stroke-width="2.8"/><text x="9.3" y="12.6" font-size="10.5" font-weight="bold" font-family="Liberation Sans">2</text></svg>
<div class="a" style="left:324px;top:454px;width:88px;height:22px;background:#c0c0c0;border-top:1px solid #808080;border-left:1px solid #808080;border-right:1px solid #fff;border-bottom:1px solid #fff"></div><div class="a" style="left:325px;top:455px;width:86px;height:20px;border:1px solid #000"></div><div class="a" style="left:326px;top:456px;width:56px;height:18px;background:#c0c0c0"></div><div class="a" style="left:0;top:0;width:640px;height:480px;clip:rect(456px,382px,474px,326px)"><div class="t" id="t47" style="left:327.50px;top:459.50px;font-size:12px;color:#808080;text-shadow:1px 1px 0 #e8e8e8;transform:scaleX(0.9300);transform-origin:0 0">700.000ps</div></div><div class="a" style="left:382px;top:456px;width:14px;height:18px;background:#c0c0c0;border-top:1px solid #fff;border-left:1px solid #fff;border-right:1px solid #000;border-bottom:1px solid #000;"></div><svg class="a" style="left:382px;top:456px" width="14" height="18" viewBox="0 0 14 18"><rect x="2.6" y="4.1" width="8.4" height="9.4" fill="none" stroke="#000" stroke-width="1.2"/><rect x="4.6" y="6.2" width="4.4" height="2.2" rx="1" fill="#fff" stroke="#000" stroke-width="0.9"/><path d="M4.5 10.5h1.5v1.5h-1.5zM7.6 10.5h1.5v1.5h-1.5z" fill="#000"/></svg><div class="a" style="left:397px;top:456px;width:13px;height:8px;background:#c0c0c0;border-top:1px solid #fff;border-left:1px solid #fff;border-right:1px solid #000;border-bottom:1px solid #000;"></div><div class="a" style="left:397px;top:465px;width:13px;height:9px;background:#c0c0c0;border-top:1px solid #fff;border-left:1px solid #fff;border-right:1px solid #000;border-bottom:1px solid #000;"></div><div class="a" style="left:397px;top:464px;width:13px;height:1px;background:#000"></div><svg class="a" style="left:397px;top:456px" width="14" height="18" viewBox="0 0 14 18"><path d="M5.3 5.5 h3.2 l-1.6 -1.6z M5.3 12.6 h3.2 l-1.6 1.6z" fill="#808080"/></svg>
<div class="a" style="left:416px;top:454px;width:79px;height:22px;background:#c0c0c0;border-top:1px solid #808080;border-left:1px solid #808080;border-right:1px solid #fff;border-bottom:1px solid #fff"></div><div class="a" style="left:417px;top:455px;width:77px;height:20px;border:1px solid #000"></div><div class="a" style="left:418px;top:456px;width:47px;height:18px;background:#c0c0c0"></div><div class="a" style="left:0;top:0;width:640px;height:480px;clip:rect(456px,465px,474px,418px)"><div class="t" id="t48" style="left:419.00px;top:459.50px;font-size:12px;color:#808080;text-shadow:1px 1px 0 #e8e8e8;transform:scaleX(0.9300);transform-origin:0 0">54.740ns</div></div><div class="a" style="left:465px;top:456px;width:14px;height:18px;background:#c0c0c0;border-top:1px solid #fff;border-left:1px solid #fff;border-right:1px solid #000;border-bottom:1px solid #000;"></div><svg class="a" style="left:465px;top:456px" width="14" height="18" viewBox="0 0 14 18"><rect x="2.6" y="4.1" width="8.4" height="9.4" fill="none" stroke="#000" stroke-width="1.2"/><rect x="4.6" y="6.2" width="4.4" height="2.2" rx="1" fill="#fff" stroke="#000" stroke-width="0.9"/><path d="M4.5 10.5h1.5v1.5h-1.5zM7.6 10.5h1.5v1.5h-1.5z" fill="#000"/></svg><div class="a" style="left:480px;top:456px;width:13px;height:8px;background:#c0c0c0;border-top:1px solid #fff;border-left:1px solid #fff;border-right:1px solid #000;border-bottom:1px solid #000;"></div><div class="a" style="left:480px;top:465px;width:13px;height:9px;background:#c0c0c0;border-top:1px solid #fff;border-left:1px solid #fff;border-right:1px solid #000;border-bottom:1px solid #000;"></div><div class="a" style="left:480px;top:464px;width:13px;height:1px;background:#000"></div><svg class="a" style="left:480px;top:456px" width="14" height="18" viewBox="0 0 14 18"><path d="M5.3 5.5 h3.2 l-1.6 -1.6z M5.3 12.6 h3.2 l-1.6 1.6z" fill="#808080"/></svg>
<div class="a" style="left:498px;top:454px;width:27px;height:22px;background:#c0c0c0;border-top:1px solid #fff;border-left:1px solid #fff;border-right:1px solid #000;border-bottom:1px solid #000;box-shadow:inset -1px -1px 0 #808080;"></div>
<svg class="a" style="left:498px;top:454px" width="27" height="23" viewBox="0 0 27 23"><rect x="3.6" y="1.6" width="5" height="12.5" rx="1.2" fill="#fff" stroke="#000" stroke-width="1.2"/><rect x="4.2" y="5.5" width="3.8" height="9" fill="#00e000"/><path d="M4.2 6.5h2.2M4.2 9h2.2M4.2 11.5h2.2" stroke="#000" stroke-width="1"/><circle cx="5.9" cy="16.6" r="4.1" fill="#00f000" stroke="#000" stroke-width="1.1"/><circle cx="13.4" cy="7.6" r="1.9" fill="none" stroke="#000" stroke-width="1.3"/><path d="M23.3 7.2 C23.3 5.8 22.4 5.2 20.8 5.2 C18.8 5.2 17.9 6.8 17.9 11.2 C17.9 15.6 18.8 17.2 20.8 17.2 C22.4 17.2 23.3 16.4 23.3 14.8" stroke="#000" stroke-width="2.3" fill="none"/></svg>
<div class="a" style="left:528px;top:454px;width:112px;height:22px;background:#c0c0c0;border-top:1px solid #808080;border-left:1px solid #808080;border-right:1px solid #fff;border-bottom:1px solid #fff"></div>
<div class="t" id="t49" style="left:532.10px;top:459.55px;font-size:12px;;transform:scaleX(0.9471);transform-origin:0 0">2:55 PM 10/25/2021</div>
</body></html>
